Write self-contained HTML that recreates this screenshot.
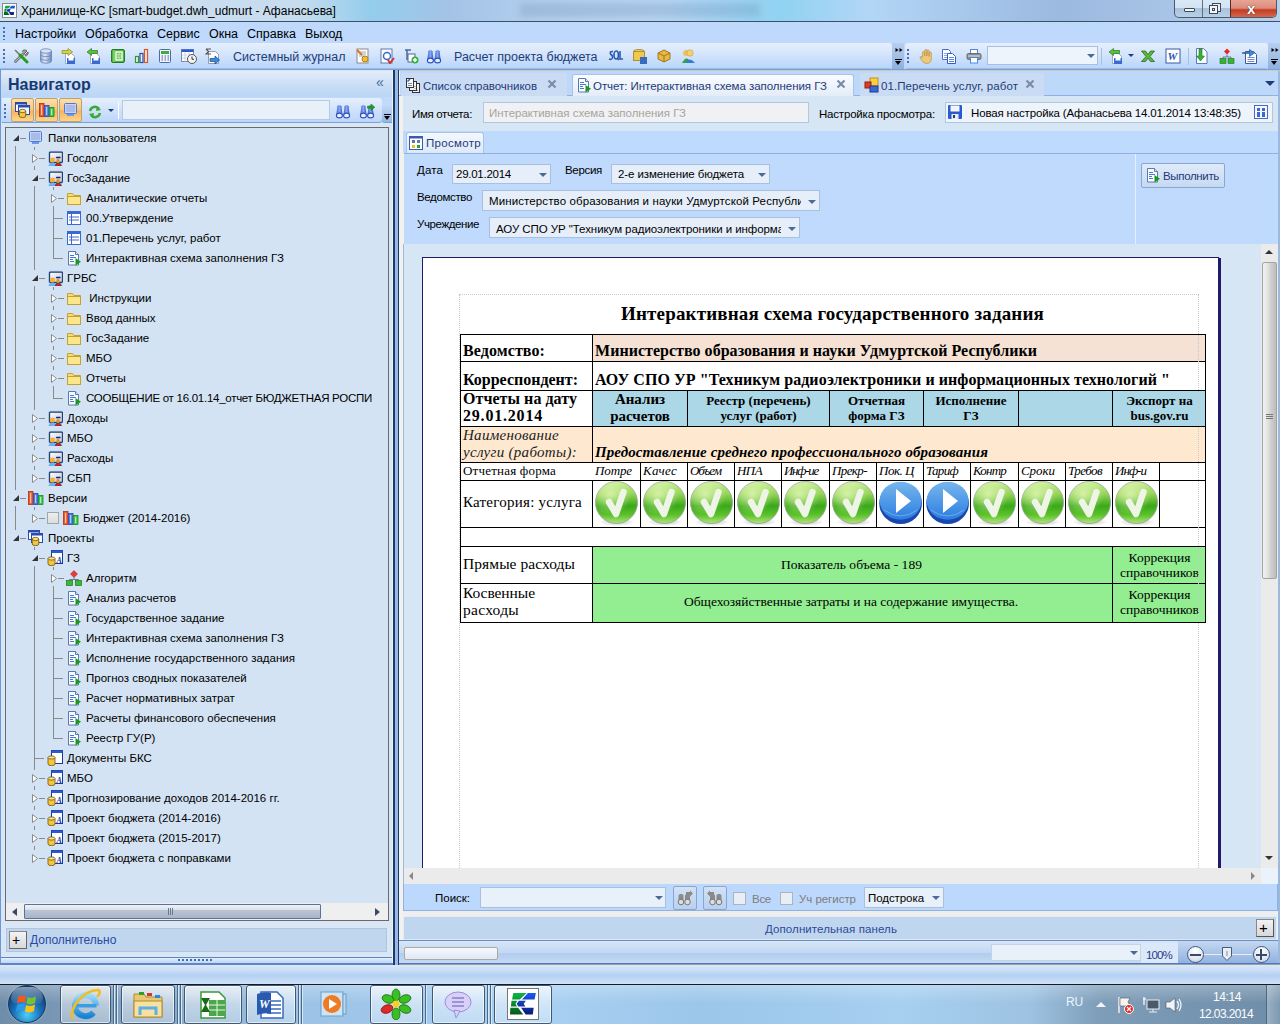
<!DOCTYPE html>
<html><head><meta charset="utf-8">
<style>
*{margin:0;padding:0;box-sizing:border-box}
html,body{width:1280px;height:1024px;overflow:hidden;position:relative;font-family:"Liberation Sans",sans-serif;font-size:12px;color:#000;background:#cfe0f4}
.a{position:absolute}
.t{position:absolute;white-space:nowrap;line-height:1}
#title{left:0;top:0;width:1280px;height:22px;background:linear-gradient(90deg,#d0e1f1 0px,#c6dcef 300px,#94cdec 370px,#a4c3e6 450px,#b2cfee 540px,#b8d6f4 660px,#90d2f2 780px,#b2d6f6 870px,#a8c8ec 960px,#9cb9e0 1060px,#a8c4e6 1174px,#b8d0ea 1280px)}
#menu{left:0;top:22px;width:1280px;height:21px;background:#bed9fc}
#tool{left:0;top:43px;width:1280px;height:26px;background:#bed9fc}
#left{left:0;top:69px;width:395px;height:896px;background:#c9dcf3}
</style></head><body>
<div id="title" class="a">
  <div class="a" style="left:2px;top:3px;width:15px;height:15px;background:#fff;border:1px solid #8a8a8a"><svg class="a" style="left:0;top:0" width="13" height="13" viewBox="0 0 30 30"><defs><linearGradient id="lgG2" x1="0" y1="0" x2="0" y2="1"><stop offset="0" stop-color="#0cb844"/><stop offset="1" stop-color="#055a1c"/></linearGradient><linearGradient id="lgB2" x1="0" y1="0" x2="0" y2="1"><stop offset="0" stop-color="#1a5af8"/><stop offset="1" stop-color="#0a1a78"/></linearGradient></defs><g transform="translate(-1,-1)"><path d="M6.25 4.9 L19.7 4.9 L12.7 11.5 L5.1 11.5Z M4.5 12.7 L10.4 12.7 L8.5 15.8 L10 18.6 L3.9 18.6Z M3.3 19.7 L11.1 19.7 L16.2 26.4 L3 26.4Z" fill="url(#lgG2)"/><path d="M20.9 4.9 L28.9 4.9 L27.5 11.5 L15 11.5Z M11.9 12.7 L18.9 12.7 L16.7 15.8 L18.3 18.6 L11.3 18.6 L9.7 15.8Z M14.1 19.7 L26.7 19.7 L25.8 26.4 L18.6 26.4Z" fill="url(#lgB2)"/></g></svg></div>
  <div class="t" style="left:21px;top:5px;font-size:12px;color:#000">Хранилище-КС [smart-budget.dwh_udmurt - Афанасьева]</div>
  <div class="a" style="left:520px;top:3px;width:240px;height:14px;background:rgba(70,100,140,.18);filter:blur(3px)"></div>
  <div class="a" style="left:1174px;top:0;width:103px;height:18px;border:1px solid #4a5a6e;border-top:none;border-radius:0 0 5px 5px;overflow:hidden;background:linear-gradient(#dbe9f6 0,#d3e3f3 45%,#a9c2dc 50%,#b9d0e6 100%)">
    <div class="a" style="left:27px;top:0;width:1px;height:18px;background:#5f6f82"></div>
    <div class="a" style="left:55px;top:0;width:47px;height:18px;background:linear-gradient(#e8a496 0,#dd8c7c 45%,#c43c22 55%,#d56e55 100%);border-left:1px solid #5a2a20"></div>
    <div class="a" style="left:9px;top:8px;width:11px;height:4px;background:#f4f4f4;border:1px solid #3b4b5f;border-radius:1px"></div>
    <div class="a" style="left:37px;top:3px;width:9px;height:9px;border:1px solid #3b4b5f;background:#eee"></div>
    <div class="a" style="left:34px;top:5px;width:9px;height:9px;border:1px solid #3b4b5f;background:#f4f4f4"><div class="a" style="left:2px;top:2px;width:3px;height:3px;border:1px solid #3b4b5f"></div></div>
    <div class="t" style="left:72px;top:1px;font-size:15px;font-weight:bold;color:#fff;text-shadow:0 0 1px #333,0 0 1px #333">x</div>
  </div>
  <div class="a" style="left:0;top:21px;width:1280px;height:1px;background:#3d4f66"></div>
</div>
<div id="menu" class="a">
  <div class="a" style="left:3px;top:5px;width:2px;height:13px;background:repeating-linear-gradient(#4b6fa8 0 2px,transparent 2px 4px)"></div>
  <div class="t" style="left:15px;top:6px;font-size:12.5px">Настройки</div>
  <div class="t" style="left:85px;top:6px;font-size:12.5px">Обработка</div>
  <div class="t" style="left:157px;top:6px;font-size:12.5px">Сервис</div>
  <div class="t" style="left:209px;top:6px;font-size:12.5px">Окна</div>
  <div class="t" style="left:247px;top:6px;font-size:12.5px">Справка</div>
  <div class="t" style="left:305px;top:6px;font-size:12.5px">Выход</div>
</div>
<div id="tool" class="a">
  <div class="a" style="left:0;top:0;width:892px;height:26px;border-radius:0 3px 3px 0;background:linear-gradient(#e6f0fd,#d2e3fb 50%,#b9d6fc);border-bottom:1px solid #9fbbe0"></div>
  <div class="a" style="left:892px;top:0;width:12px;height:26px;background:linear-gradient(#b7cfee,#8fb1df)"></div>
  <div class="a" style="left:905px;top:0;width:363px;height:26px;border-radius:3px;background:linear-gradient(#e6f0fd,#d2e3fb 50%,#b9d6fc);border-bottom:1px solid #9fbbe0"></div>
  <div class="a" style="left:1268px;top:0;width:12px;height:26px;background:linear-gradient(#b7cfee,#8fb1df)"></div>
  <div class="a" style="left:3px;top:6px;width:2px;height:14px;background:repeating-linear-gradient(#4b6fa8 0 2px,transparent 2px 4px)"></div>
  <div class="a" style="left:907px;top:6px;width:2px;height:14px;background:repeating-linear-gradient(#4b6fa8 0 2px,transparent 2px 4px)"></div>
  <svg class="a" style="left:13px;top:5px" width="16" height="16" viewBox="0 0 16 16"><path d="M2.5 13.5 L10 6" stroke="#5a5a5a" stroke-width="2.6" stroke-linecap="round"/><path d="M2.5 13.5 L10 6" stroke="#b8b8b8" stroke-width="1.2" stroke-linecap="round"/><path d="M9 3.5 A3 3 0 0 1 14 3 L11.5 5.5 L12.5 6.5 L15 4 A3 3 0 0 1 12 8" fill="#9a9a9a" stroke="#555" stroke-width=".8"/><path d="M2 2 L7 7" stroke="#777" stroke-width="1.6"/><path d="M7 7 L14 14" stroke="#2a9a1a" stroke-width="3" stroke-linecap="round"/></svg>
  <svg class="a" style="left:38px;top:5px" width="16" height="16" viewBox="0 0 16 16"><defs><linearGradient id="dbg" x1="0" x2="1"><stop offset="0" stop-color="#8aa8d8"/><stop offset=".4" stop-color="#dfe8f8"/><stop offset="1" stop-color="#6a88c0"/></linearGradient></defs><path d="M2.5 3 V13 A5.5 2.2 0 0 0 13.5 13 V3" fill="url(#dbg)" stroke="#6a84b0" stroke-width=".8"/><ellipse cx="8" cy="3" rx="5.5" ry="2.2" fill="#d8e4f6" stroke="#6a84b0" stroke-width=".8"/><path d="M2.5 6.5 A5.5 2.2 0 0 0 13.5 6.5 M2.5 10 A5.5 2.2 0 0 0 13.5 10" fill="none" stroke="#6a84b0" stroke-width=".8"/></svg>
  <svg class="a" style="left:61px;top:5px" width="16" height="16" viewBox="0 0 16 16"><path d="M4.5 5.5 h6 l3 3 v7 h-9z" fill="#fff" stroke="#8a9ab8" stroke-width=".8"/><rect x="6" y="10" width="8" height="6" fill="#3a6ad0"/><rect x="7.5" y="10" width="5" height="2.5" fill="#fff"/><path d="M1 2.5 h6 v-2 l4.5 3.5 l-4.5 3.5 v-2 h-6z" fill="#d8d040" stroke="#8a8a20" stroke-width=".7"/></svg>
  <svg class="a" style="left:86px;top:5px" width="16" height="16" viewBox="0 0 16 16"><path d="M4.5 5.5 h6 l3 3 v7 h-9z" fill="#fff" stroke="#8a9ab8" stroke-width=".8"/><rect x="6" y="10" width="8" height="6" fill="#3a6ad0"/><rect x="7.5" y="10" width="5" height="2.5" fill="#fff"/><path d="M11.5 2.5 h-6 v-2 l-4.5 3.5 l4.5 3.5 v-2 h6z" fill="#5ac040" stroke="#2a7a20" stroke-width=".7"/></svg>
  <svg class="a" style="left:110px;top:5px" width="16" height="16" viewBox="0 0 16 16"><rect x="1.5" y="1.5" width="13" height="13" rx="1.5" fill="#4cb83a" stroke="#2a7a20"/><path d="M4 2v12" stroke="#a8e098" stroke-width="1"/><rect x="6" y="4" width="6" height="8" fill="none" stroke="#fff" stroke-width="1.4"/><rect x="8" y="6" width="2" height="4" fill="none" stroke="#fff" stroke-width=".8"/></svg>
  <svg class="a" style="left:133px;top:5px" width="16" height="16" viewBox="0 0 16 16"><rect x="2.5" y="8.5" width="3" height="6" fill="#e8f4e0" stroke="#2a9a2a" stroke-width="1.2"/><rect x="7" y="5.5" width="3" height="9" fill="#e8eefa" stroke="#2a4aa0" stroke-width="1.2"/><rect x="11.5" y="1.5" width="3" height="13" fill="#faeae4" stroke="#d05a30" stroke-width="1.2"/></svg>
  <svg class="a" style="left:157px;top:5px" width="16" height="16" viewBox="0 0 16 16"><rect x="2.5" y="1.5" width="11" height="13" rx="1" fill="#f4f6fc" stroke="#4a6ab0"/><rect x="4" y="3" width="8" height="3" fill="#3ab03a"/><path d="M4.5 8h1.5M7.5 8h1.5M10.5 8h1.5M4.5 10h1.5M7.5 10h1.5M10.5 10h1.5M4.5 12h1.5M7.5 12h1.5M10.5 12h1.5" stroke="#3a5aa0" stroke-width="1.2"/></svg>
  <svg class="a" style="left:181px;top:5px" width="16" height="16" viewBox="0 0 16 16"><rect x="0.5" y="1.5" width="12" height="12" fill="#fff" stroke="#7a8ab0"/><rect x="0.5" y="1.5" width="12" height="2.5" fill="#2a5ad0"/><path d="M1 7h11M1 10h11M4 4v10M8 4v10" stroke="#b0bcd8" stroke-width=".6"/><circle cx="11" cy="11" r="4.5" fill="#f4f4f4" stroke="#555"/><path d="M11 8.5v2.8h2" stroke="#333" fill="none"/></svg>
  <svg class="a" style="left:205px;top:5px" width="16" height="16" viewBox="0 0 16 16"><path d="M3.5 3.5 h7 l3 3 v9 h-10z" fill="#fff" stroke="#7a8aa0" stroke-width=".8"/><path d="M1 1 h5 M1 1 l2.5 2.5 l-2.5 2.5 h5" stroke="#555" stroke-width="1.2" fill="none"/><path d="M5 10.5 h5 v-2.5 l4.5 4 l-4.5 4 v-2.5 h-5z" fill="#3a8ae0" stroke="#1a4a90" stroke-width=".7"/></svg>
  <svg class="a" style="left:355px;top:5px" width="16" height="16" viewBox="0 0 16 16"><rect x="2" y="1" width="11" height="14" fill="#fff" stroke="#8a8a8a"/><path d="M4 4h7M4 6h7M4 8h5" stroke="#9ab"/><circle cx="10" cy="11" r="3" fill="#f0c040" stroke="#b08010"/><path d="M2 2 L7 7" stroke="#e07020" stroke-width="2"/></svg>
  <svg class="a" style="left:379px;top:5px" width="16" height="16" viewBox="0 0 16 16"><rect x="2" y="1" width="11" height="14" fill="#fff" stroke="#5a7ab0"/><circle cx="8" cy="8" r="3.5" fill="none" stroke="#3a6ac0" stroke-width="1.5"/><path d="M9 12 l2 3 l4 -5" stroke="#d03030" stroke-width="2" fill="none"/></svg>
  <svg class="a" style="left:403px;top:5px" width="16" height="16" viewBox="0 0 16 16"><path d="M2 2h6M4 2v10" stroke="#4a6a9a" stroke-width="1.5"/><rect x="5" y="6" width="7" height="8" fill="#fff" stroke="#4a6a9a"/><circle cx="12" cy="12" r="3.5" fill="#3ab03a"/><path d="M12 10v4M10 12h4" stroke="#fff" stroke-width="1.5"/></svg>
  <svg class="a" style="left:426px;top:5px" width="16" height="16" viewBox="0 0 16 16"><defs><linearGradient id="bng3" x1="0" x2="1"><stop offset="0" stop-color="#3a60d0"/><stop offset=".5" stop-color="#8aa8f0"/><stop offset="1" stop-color="#2a50c0"/></linearGradient></defs><path d="M1.2 12.5 L2.4 3.2 Q4.4 0.6 6.4 3.2 L7.6 12.5Z" fill="url(#bng3)"/><path d="M8.4 12.5 L9.6 3.2 Q11.6 0.6 13.6 3.2 L14.8 12.5Z" fill="url(#bng3)"/><ellipse cx="4.4" cy="12.5" rx="3" ry="2.4" fill="#e8f0fc" stroke="#2a50c0" stroke-width="1.1"/><ellipse cx="11.6" cy="12.5" rx="3" ry="2.4" fill="#e8f0fc" stroke="#2a50c0" stroke-width="1.1"/></svg>
  <svg class="a" style="left:608px;top:5px" width="16" height="16" viewBox="0 0 16 16"><path d="M5 3.5 Q1.5 3 2.5 6 Q5 7.5 4.5 10 Q3.5 12 1 11" stroke="#2a5ab0" stroke-width="1.6" fill="none"/><ellipse cx="8.2" cy="7" rx="2.2" ry="4" stroke="#2a5ab0" stroke-width="1.6" fill="none"/><path d="M9 10 L11 12" stroke="#2a5ab0" stroke-width="1.6"/><path d="M12 3 V11 H15" stroke="#2a5ab0" stroke-width="1.6" fill="none"/></svg>
  <svg class="a" style="left:632px;top:5px" width="16" height="16" viewBox="0 0 16 16"><ellipse cx="7" cy="3.5" rx="5.5" ry="2" fill="#f0d070" stroke="#b09030"/><rect x="1.5" y="3.5" width="11" height="9" fill="#f0c850" stroke="#b09030"/><rect x="8" y="9" width="7" height="7" fill="#3a6ac0"/></svg>
  <svg class="a" style="left:656px;top:5px" width="16" height="16" viewBox="0 0 16 16"><path d="M8 2 L14 5 V11 L8 14 L2 11 V5 Z" fill="#e8b840" stroke="#a07820"/><path d="M2 5 L8 8 L14 5 M8 8 V14" stroke="#a07820" fill="none"/></svg>
  <svg class="a" style="left:680px;top:5px" width="16" height="16" viewBox="0 0 16 16"><circle cx="6" cy="5" r="3" fill="#f0c060"/><circle cx="10" cy="5" r="3.2" fill="#f5d070" stroke="#c09030" stroke-width=".5"/><path d="M2 15 Q6 8 9 12 V15Z" fill="#3aa03a"/><path d="M5 15 Q10 8 15 15Z" fill="#3a7ad0"/></svg>
  <svg class="a" style="left:918px;top:5px" width="16" height="16" viewBox="0 0 16 16"><path d="M4.5 9.5 V4.5 a1.1 1.1 0 0 1 2.2 0 V8 V2.5 a1.1 1.1 0 0 1 2.2 0 V8 V3 a1.1 1.1 0 0 1 2.2 0 V8.5 V5 a1.1 1.1 0 0 1 2.2 0 V11 Q13 15.5 8.5 15.5 Q5.5 15.5 3.5 12 L1.8 9 Q2.8 7.8 4.5 9.5Z" fill="#eec878" stroke="#b8904a" stroke-width=".7"/></svg>
  <svg class="a" style="left:941px;top:5px" width="16" height="16" viewBox="0 0 16 16"><path d="M1.5 1.5 h6 l2 2 v8 h-8z" fill="#fff" stroke="#4a6ad0"/><path d="M3 5.5h4M3 7.5h4M3 9.5h4" stroke="#8aa8e0"/><path d="M6.5 5.5 h5 l3 3 v7 h-8z" fill="#fff" stroke="#3a5ac8"/><path d="M8 9.5h5M8 11.5h5M8 13.5h5" stroke="#5a88d8"/></svg>
  <svg class="a" style="left:966px;top:5px" width="16" height="16" viewBox="0 0 16 16"><rect x="4.5" y="1.5" width="7" height="5" fill="#fff" stroke="#4a8ad8"/><rect x="1" y="5.5" width="14" height="6" rx="1.5" fill="#8a8e92" stroke="#6a6e72"/><rect x="2" y="7" width="12" height="2" fill="#b8bcc0"/><rect x="4.5" y="9.5" width="7" height="5.5" fill="#fff" stroke="#4a8ad8"/></svg>
  <svg class="a" style="left:1108px;top:5px" width="16" height="16" viewBox="0 0 16 16"><path d="M4.5 5.5 h6 l3 3 v7 h-9z" fill="#fff" stroke="#8a9ab8" stroke-width=".8"/><rect x="6" y="10" width="8" height="6" fill="#3a6ad0"/><rect x="7.5" y="10" width="5" height="2.5" fill="#fff"/><path d="M11.5 2.5 h-6 v-2 l-4.5 3.5 l4.5 3.5 v-2 h6z" fill="#5ac040" stroke="#2a7a20" stroke-width=".7"/></svg>
  <svg class="a" style="left:1140px;top:5px" width="16" height="16" viewBox="0 0 16 16"><path d="M1.5 3 L5.5 3 L8 6.5 L10.5 3 L14.5 3 L10 8.5 L14.5 13.5 L10.5 13.5 L8 10 L5.5 13.5 L1.5 13.5 L6 8.5Z" fill="#5ab83a" stroke="#2a6a1a" stroke-width=".8"/></svg>
  <svg class="a" style="left:1165px;top:5px" width="16" height="16" viewBox="0 0 16 16"><rect x="1" y="1" width="14" height="14" fill="#fff" stroke="#3a5aa0"/><text x="2.5" y="12" font-family="Liberation Serif" font-style="italic" font-weight="bold" font-size="11" fill="#2a5ab0">W</text></svg>
  <svg class="a" style="left:1194px;top:5px" width="16" height="16" viewBox="0 0 16 16"><path d="M2.5 0.5 h7 l3.5 3.5 v11.5 h-10.5z" fill="#fff" stroke="#5a7ab8"/><path d="M5 1 V8 H2.5 L6.5 13 L10.5 8 H8 V1Z" fill="#3ab03a" stroke="#1a7a1a" stroke-width=".6"/></svg>
  <svg class="a" style="left:1219px;top:5px" width="16" height="16" viewBox="0 0 16 16"><path d="M8 0.5 L11 3.5 L8 6.5 L5 3.5Z" fill="#e82a2a"/><path d="M8 6.5 V9 M4 9 H12 M4 9v2 M12 9v2" stroke="#6a7aa0"/><rect x="1" y="10.5" width="6" height="5" fill="#3ab03a" stroke="#1a7a1a" stroke-width=".6"/><rect x="9" y="10.5" width="6" height="5" fill="#3ab03a" stroke="#1a7a1a" stroke-width=".6"/></svg>
  <svg class="a" style="left:1242px;top:5px" width="16" height="16" viewBox="0 0 16 16"><path d="M3.5 3.5 h8 l3 3 v9 h-11z" fill="#fff" stroke="#3a5aa0"/><path d="M5.5 9.5h7M5.5 11.5h7M5.5 13.5h7" stroke="#6a8ad0"/><path d="M0.5 4.5 h7 v-3 l5 3.5 l-5 3.5 v-3 h-7z" fill="#3a8ae0" stroke="#1a4a90" stroke-width=".6"/></svg>
  <div class="t" style="left:233px;top:8px;font-size:12.5px;color:#1e3c78">Системный журнал</div>
  <div class="t" style="left:454px;top:8px;font-size:12.5px;color:#1e3c78">Расчет проекта бюджета</div>
  <div class="a" style="left:987px;top:3px;width:111px;height:19px;background:#eef4fc;border:1px solid #a8c0de"></div>
  <div class="a" style="left:1087px;top:11px;width:0;height:0;border-left:4px solid transparent;border-right:4px solid transparent;border-top:4px solid #4a6a9a"></div>
  <div class="a" style="left:1101px;top:5px;width:1px;height:17px;background:#a9c1e0"></div>
  <div class="a" style="left:1188px;top:5px;width:1px;height:17px;background:#a9c1e0"></div>
  <div class="a" style="left:1128px;top:11px;width:0;height:0;border-left:3px solid transparent;border-right:3px solid transparent;border-top:3px solid #1e3c78"></div>
  <svg class="a" style="left:895px;top:4px" width="8" height="6" viewBox="0 0 8 6"><path d="M0.5 1 L3.5 3 L0.5 5Z M4.5 1 L7.5 3 L4.5 5Z" fill="#000"/></svg>
  <div class="a" style="left:895px;top:16px;width:7px;height:6px;border-top:1px solid #000;"><div class="a" style="left:0;top:1px;border-left:3.5px solid transparent;border-right:3.5px solid transparent;border-top:4px solid #000"></div></div>
  <svg class="a" style="left:1271px;top:4px" width="8" height="6" viewBox="0 0 8 6"><path d="M0.5 1 L3.5 3 L0.5 5Z M4.5 1 L7.5 3 L4.5 5Z" fill="#000"/></svg>
  <div class="a" style="left:1271px;top:16px;width:7px;height:6px;border-top:1px solid #000;"><div class="a" style="left:0;top:1px;border-left:3.5px solid transparent;border-right:3.5px solid transparent;border-top:4px solid #000"></div></div>
</div>



<div id="left" class="a">
  <div class="a" style="left:0;top:0;width:393px;height:896px;background:#d8e6f5;border-left:1px solid #6a98d8;border-top:1px solid #6a98d8"></div>
  <div class="a" style="left:1px;top:2px;width:391px;height:26px;background:linear-gradient(#e2ecfb,#c8dcf5 60%,#b9d5f8)"></div>
  <div class="t" style="left:8px;top:8px;font-size:16px;font-weight:bold;color:#173a72">Навигатор</div>
  <div class="t" style="left:376px;top:6px;font-size:14px;color:#4a6a9a">«</div>
  <div class="a" style="left:1px;top:28px;width:392px;height:26px;background:#c2dafa"></div><div class="a" style="left:2px;top:29px;width:380px;height:25px;border-radius:0 4px 4px 0;background:linear-gradient(#e6f0fd,#d0e2fa 50%,#bcd6fa);border-bottom:1px solid #7aa0d8"></div>
  <div class="a" style="left:382px;top:35px;width:11px;height:19px;border-radius:0 0 0 3px;background:linear-gradient(#c6dcf8,#94b6e2);border-bottom:1px solid #7aa0d8"></div>
  <div class="a" style="left:384px;top:45px;width:7px;height:1px;background:#000"></div>
  <div class="a" style="left:384px;top:47px;border-left:3.5px solid transparent;border-right:3.5px solid transparent;border-top:4px solid #000"></div>
  <div class="a" style="left:4px;top:35px;width:2px;height:14px;background:repeating-linear-gradient(#4b6fa8 0 2px,transparent 2px 4px)"></div>
  <div class="a" style="left:11px;top:29px;width:23px;height:24px;border:1px solid #c2a068;border-radius:2px;background:linear-gradient(#fde0a8,#f9c57c 50%,#f7b25a 55%,#fbd690)"></div>
  <div class="a" style="left:35px;top:29px;width:23px;height:24px;border:1px solid #c2a068;border-radius:2px;background:linear-gradient(#fde0a8,#f9c57c 50%,#f7b25a 55%,#fbd690)"></div>
  <div class="a" style="left:59px;top:29px;width:23px;height:24px;border:1px solid #c2a068;border-radius:2px;background:linear-gradient(#fde0a8,#f9c57c 50%,#f7b25a 55%,#fbd690)"></div>
  <svg class="a" style="left:15px;top:33px" width="16" height="16" viewBox="0 0 16 16"><rect x="0.5" y="0.5" width="11" height="9" fill="#fff" stroke="#2a4ab0"/><rect x="0.5" y="0.5" width="11" height="2" fill="#2a4ab0"/><rect x="3.5" y="3.5" width="11" height="9" fill="#f4f8ff" stroke="#2a4ab0"/><rect x="3.5" y="3.5" width="11" height="2" fill="#2a4ab0"/><path d="M4.25 9 V14 A3.25 1.6 0 0 0 10.75 14 V9" fill="#f6c63a" stroke="#6a5010" stroke-width=".8"/><ellipse cx="7.5" cy="9" rx="3.25" ry="1.6" fill="#fde48a" stroke="#6a5010" stroke-width=".8"/></svg>
  <svg class="a" style="left:39px;top:33px" width="16" height="16" viewBox="0 0 16 16"><rect x="0.5" y="1.5" width="4.5" height="13" fill="#f05a2a" stroke="#b03010" stroke-width=".8"/><rect x="5.5" y="3.5" width="4.5" height="11" fill="#4a7ae8" stroke="#2a4ab0" stroke-width=".8"/><rect x="10.5" y="5.5" width="4.5" height="9" fill="#3ac84a" stroke="#1a8a2a" stroke-width=".8"/><path d="M2.7 3v10M7.7 5v8M12.7 7v6" stroke="#fff" stroke-width=".9" opacity=".85"/></svg>
  <svg class="a" style="left:63px;top:33px" width="16" height="16" viewBox="0 0 16 16"><rect x="1.5" y="1.5" width="12" height="10" rx="1" fill="#c9d6f2" stroke="#4a7ad8"/><rect x="3" y="3" width="9" height="7" fill="#a9bbe8"/><rect x="4" y="12" width="7" height="2" fill="#6a9ae8"/></svg>
  <svg class="a" style="left:87px;top:35px" width="16" height="16" viewBox="0 0 16 16"><path d="M3 7 A5 5 0 0 1 12 5" stroke="#3aa83a" stroke-width="2.5" fill="none"/><path d="M10 2 L14 6 L9 7Z" fill="#3aa83a"/><path d="M13 9 A5 5 0 0 1 4 11" stroke="#3aa83a" stroke-width="2.5" fill="none"/><path d="M6 14 L2 10 L7 9Z" fill="#3aa83a"/></svg>
  <div class="a" style="left:108px;top:40px;border-left:3px solid transparent;border-right:3px solid transparent;border-top:3px solid #1e3c78"></div>
  <div class="a" style="left:118px;top:33px;width:1px;height:17px;background:#fff"></div>
  <div class="a" style="left:122px;top:31px;width:208px;height:20px;background:#e8f0fa;border:1px solid #b5c9e4"></div>
  <svg class="a" style="left:335px;top:34px" width="16" height="16" viewBox="0 0 16 16"><defs><linearGradient id="bng" x1="0" x2="1"><stop offset="0" stop-color="#3a60d0"/><stop offset=".5" stop-color="#8aa8f0"/><stop offset="1" stop-color="#2a50c0"/></linearGradient></defs><path d="M1.2 12.5 L2.4 3.2 Q4.4 0.6 6.4 3.2 L7.6 12.5Z" fill="url(#bng)"/><path d="M8.4 12.5 L9.6 3.2 Q11.6 0.6 13.6 3.2 L14.8 12.5Z" fill="url(#bng)"/><ellipse cx="4.4" cy="12.5" rx="3" ry="2.4" fill="#e8f0fc" stroke="#2a50c0" stroke-width="1.1"/><ellipse cx="11.6" cy="12.5" rx="3" ry="2.4" fill="#e8f0fc" stroke="#2a50c0" stroke-width="1.1"/></svg>
  <svg class="a" style="left:359px;top:34px" width="16" height="16" viewBox="0 0 16 16"><defs><linearGradient id="bng2" x1="0" x2="1"><stop offset="0" stop-color="#3a60d0"/><stop offset=".5" stop-color="#8aa8f0"/><stop offset="1" stop-color="#2a50c0"/></linearGradient></defs><path d="M1.2 12.5 L2.4 3.2 Q4.4 0.6 6.4 3.2 L7.6 12.5Z" fill="url(#bng2)"/><path d="M8.4 12.5 L9.6 3.2 Q11.6 0.6 13.6 3.2 L14.8 12.5Z" fill="url(#bng2)"/><ellipse cx="4.4" cy="12.5" rx="3" ry="2.4" fill="#e8f0fc" stroke="#2a50c0" stroke-width="1.1"/><ellipse cx="11.6" cy="12.5" rx="3" ry="2.4" fill="#e8f0fc" stroke="#2a50c0" stroke-width="1.1"/><path d="M8.5 3.2 h3.5 v-2.2 l3.8 3.2 l-3.8 3.2 v-2.2 h-3.5z" fill="#22a022" stroke="#107010" stroke-width=".5"/></svg>
  <!-- tree frame -->
  <div class="a" style="left:5px;top:58px;width:384px;height:794px;border:1px solid #6a6a6a;background:#d3e3f3"></div>
  <div class="a" style="left:6px;top:834px;width:382px;height:17px;background:#efefef"></div>
  <div class="a" style="left:12px;top:839px;border-top:4px solid transparent;border-bottom:4px solid transparent;border-right:5px solid #3a4a6a"></div>
  <div class="a" style="left:375px;top:839px;border-top:4px solid transparent;border-bottom:4px solid transparent;border-left:5px solid #3a4a6a"></div>
  <div class="a" style="left:24px;top:835px;width:297px;height:15px;border:1px solid #5a72a0;border-radius:1px;background:linear-gradient(#f0f2f5 0,#dde2ea 35%,#b9c4d4 40%,#a9b6c8 100%)"></div>
  <div class="a" style="left:168px;top:839px;width:6px;height:7px;background:repeating-linear-gradient(90deg,#6a7a90 0 1px,transparent 1px 2px)"></div>
  <!-- dop -->
  <div class="a" style="left:6px;top:859px;width:381px;height:24px;background:#c0d6ee;border:1px solid #b0c4dc"></div>
  <div class="a" style="left:9px;top:862px;width:18px;height:18px;background:linear-gradient(#f3f3f3,#d8d8d8);border:1px solid #888;border-right-color:#666;border-bottom-color:#666"></div>
  <div class="t" style="left:12px;top:864px;font-size:14px;color:#000">+</div>
  <div class="t" style="left:30px;top:865px;color:#2a4aa0">Дополнительно</div>
  <div class="a" style="left:1px;top:888px;width:392px;height:1px;background:#5f86c0"></div>
  <div class="a" style="left:1px;top:889px;width:392px;height:5px;background:linear-gradient(#e2eefb,#bcd6f8)"></div>
  <div class="a" style="left:178px;top:890px;width:34px;height:2px;background:repeating-linear-gradient(90deg,#4a6aa8 0 2px,transparent 2px 4px)"></div>
  <div class="a" style="left:392px;top:1px;width:1px;height:895px;background:#f4f2f0"></div>
</div>
<div id="tree" class="a" style="left:0;top:0;width:395px;height:965px;overflow:hidden;clip-path:inset(128px 7px 63px 6px)">
<div class="a" style="left:15px;top:146px;width:1px;height:344px;border-left:1px solid #8a8a8a"></div>
<div class="a" style="left:34px;top:166px;width:1px;height:4px;border-left:1px dashed #8a8a8a"></div>
<div class="a" style="left:34px;top:186px;width:1px;height:84px;border-left:1px solid #8a8a8a"></div>
<div class="a" style="left:53px;top:206px;width:1px;height:2px;border-left:1px dashed #8a8a8a"></div>
<div class="a" style="left:53px;top:218px;width:1px;height:10px;border-left:1px solid #8a8a8a"></div>
<div class="a" style="left:53px;top:238px;width:1px;height:10px;border-left:1px solid #8a8a8a"></div>
<div class="a" style="left:34px;top:286px;width:1px;height:124px;border-left:1px solid #8a8a8a"></div>
<div class="a" style="left:53px;top:306px;width:1px;height:4px;border-left:1px dashed #8a8a8a"></div>
<div class="a" style="left:53px;top:326px;width:1px;height:4px;border-left:1px dashed #8a8a8a"></div>
<div class="a" style="left:53px;top:346px;width:1px;height:4px;border-left:1px dashed #8a8a8a"></div>
<div class="a" style="left:53px;top:366px;width:1px;height:4px;border-left:1px dashed #8a8a8a"></div>
<div class="a" style="left:53px;top:386px;width:1px;height:2px;border-left:1px dashed #8a8a8a"></div>
<div class="a" style="left:34px;top:426px;width:1px;height:4px;border-left:1px dashed #8a8a8a"></div>
<div class="a" style="left:34px;top:446px;width:1px;height:4px;border-left:1px dashed #8a8a8a"></div>
<div class="a" style="left:34px;top:466px;width:1px;height:4px;border-left:1px dashed #8a8a8a"></div>
<div class="a" style="left:15px;top:506px;width:1px;height:24px;border-left:1px solid #8a8a8a"></div>
<div class="a" style="left:34px;top:566px;width:1px;height:182px;border-left:1px solid #8a8a8a"></div>
<div class="a" style="left:53px;top:586px;width:1px;height:2px;border-left:1px dashed #8a8a8a"></div>
<div class="a" style="left:53px;top:598px;width:1px;height:10px;border-left:1px solid #8a8a8a"></div>
<div class="a" style="left:53px;top:618px;width:1px;height:10px;border-left:1px solid #8a8a8a"></div>
<div class="a" style="left:53px;top:638px;width:1px;height:10px;border-left:1px solid #8a8a8a"></div>
<div class="a" style="left:53px;top:658px;width:1px;height:10px;border-left:1px solid #8a8a8a"></div>
<div class="a" style="left:53px;top:678px;width:1px;height:10px;border-left:1px solid #8a8a8a"></div>
<div class="a" style="left:53px;top:698px;width:1px;height:10px;border-left:1px solid #8a8a8a"></div>
<div class="a" style="left:53px;top:718px;width:1px;height:10px;border-left:1px solid #8a8a8a"></div>
<div class="a" style="left:34px;top:758px;width:1px;height:12px;border-left:1px solid #8a8a8a"></div>
<div class="a" style="left:34px;top:786px;width:1px;height:4px;border-left:1px dashed #8a8a8a"></div>
<div class="a" style="left:34px;top:806px;width:1px;height:4px;border-left:1px dashed #8a8a8a"></div>
<div class="a" style="left:34px;top:826px;width:1px;height:4px;border-left:1px dashed #8a8a8a"></div>
<div class="a" style="left:34px;top:846px;width:1px;height:4px;border-left:1px dashed #8a8a8a"></div>
<div class="a" style="left:20px;top:138px;width:6px;height:1px;background:#8a8a8a"></div>
<div class="a" style="left:39px;top:158px;width:6px;height:1px;background:#8a8a8a"></div>
<div class="a" style="left:39px;top:178px;width:6px;height:1px;background:#8a8a8a"></div>
<div class="a" style="left:58px;top:198px;width:6px;height:1px;background:#8a8a8a"></div>
<div class="a" style="left:53px;top:208px;width:1px;height:10px;background:#8a8a8a"></div>
<div class="a" style="left:53px;top:218px;width:10px;height:1px;background:#8a8a8a"></div>
<div class="a" style="left:53px;top:228px;width:1px;height:10px;background:#8a8a8a"></div>
<div class="a" style="left:53px;top:238px;width:10px;height:1px;background:#8a8a8a"></div>
<div class="a" style="left:53px;top:248px;width:1px;height:10px;background:#8a8a8a"></div>
<div class="a" style="left:53px;top:258px;width:10px;height:1px;background:#8a8a8a"></div>
<div class="a" style="left:39px;top:278px;width:6px;height:1px;background:#8a8a8a"></div>
<div class="a" style="left:58px;top:298px;width:6px;height:1px;background:#8a8a8a"></div>
<div class="a" style="left:58px;top:318px;width:6px;height:1px;background:#8a8a8a"></div>
<div class="a" style="left:58px;top:338px;width:6px;height:1px;background:#8a8a8a"></div>
<div class="a" style="left:58px;top:358px;width:6px;height:1px;background:#8a8a8a"></div>
<div class="a" style="left:58px;top:378px;width:6px;height:1px;background:#8a8a8a"></div>
<div class="a" style="left:53px;top:388px;width:1px;height:10px;background:#8a8a8a"></div>
<div class="a" style="left:53px;top:398px;width:10px;height:1px;background:#8a8a8a"></div>
<div class="a" style="left:39px;top:418px;width:6px;height:1px;background:#8a8a8a"></div>
<div class="a" style="left:39px;top:438px;width:6px;height:1px;background:#8a8a8a"></div>
<div class="a" style="left:39px;top:458px;width:6px;height:1px;background:#8a8a8a"></div>
<div class="a" style="left:39px;top:478px;width:6px;height:1px;background:#8a8a8a"></div>
<div class="a" style="left:20px;top:498px;width:6px;height:1px;background:#8a8a8a"></div>
<div class="a" style="left:39px;top:518px;width:6px;height:1px;background:#8a8a8a"></div>
<div class="a" style="left:20px;top:538px;width:6px;height:1px;background:#8a8a8a"></div>
<div class="a" style="left:39px;top:558px;width:6px;height:1px;background:#8a8a8a"></div>
<div class="a" style="left:58px;top:578px;width:6px;height:1px;background:#8a8a8a"></div>
<div class="a" style="left:53px;top:588px;width:1px;height:10px;background:#8a8a8a"></div>
<div class="a" style="left:53px;top:598px;width:10px;height:1px;background:#8a8a8a"></div>
<div class="a" style="left:53px;top:608px;width:1px;height:10px;background:#8a8a8a"></div>
<div class="a" style="left:53px;top:618px;width:10px;height:1px;background:#8a8a8a"></div>
<div class="a" style="left:53px;top:628px;width:1px;height:10px;background:#8a8a8a"></div>
<div class="a" style="left:53px;top:638px;width:10px;height:1px;background:#8a8a8a"></div>
<div class="a" style="left:53px;top:648px;width:1px;height:10px;background:#8a8a8a"></div>
<div class="a" style="left:53px;top:658px;width:10px;height:1px;background:#8a8a8a"></div>
<div class="a" style="left:53px;top:668px;width:1px;height:10px;background:#8a8a8a"></div>
<div class="a" style="left:53px;top:678px;width:10px;height:1px;background:#8a8a8a"></div>
<div class="a" style="left:53px;top:688px;width:1px;height:10px;background:#8a8a8a"></div>
<div class="a" style="left:53px;top:698px;width:10px;height:1px;background:#8a8a8a"></div>
<div class="a" style="left:53px;top:708px;width:1px;height:10px;background:#8a8a8a"></div>
<div class="a" style="left:53px;top:718px;width:10px;height:1px;background:#8a8a8a"></div>
<div class="a" style="left:53px;top:728px;width:1px;height:10px;background:#8a8a8a"></div>
<div class="a" style="left:53px;top:738px;width:10px;height:1px;background:#8a8a8a"></div>
<div class="a" style="left:34px;top:748px;width:1px;height:10px;background:#8a8a8a"></div>
<div class="a" style="left:34px;top:758px;width:10px;height:1px;background:#8a8a8a"></div>
<div class="a" style="left:39px;top:778px;width:6px;height:1px;background:#8a8a8a"></div>
<div class="a" style="left:39px;top:798px;width:6px;height:1px;background:#8a8a8a"></div>
<div class="a" style="left:39px;top:818px;width:6px;height:1px;background:#8a8a8a"></div>
<div class="a" style="left:39px;top:838px;width:6px;height:1px;background:#8a8a8a"></div>
<div class="a" style="left:39px;top:858px;width:6px;height:1px;background:#8a8a8a"></div>
<div class="a" style="left:34px;top:147px;width:1px;height:3px;border-left:1px dashed #8a8a8a"></div>
<div class="a" style="left:53px;top:187px;width:1px;height:3px;border-left:1px dashed #8a8a8a"></div>
<div class="a" style="left:53px;top:287px;width:1px;height:3px;border-left:1px dashed #8a8a8a"></div>
<div class="a" style="left:34px;top:507px;width:1px;height:3px;border-left:1px dashed #8a8a8a"></div>
<div class="a" style="left:34px;top:547px;width:1px;height:3px;border-left:1px dashed #8a8a8a"></div>
<div class="a" style="left:53px;top:567px;width:1px;height:3px;border-left:1px dashed #8a8a8a"></div>
<div class="a" style="left:13px;top:135px;width:0;height:0;border-left:6px solid transparent;border-bottom:6px solid #333"></div>
<svg class="a" style="left:28px;top:130px" width="16" height="16" viewBox="0 0 16 16"><rect x="1.5" y="1.5" width="12" height="10" rx="1" fill="#c9d6f2" stroke="#4a7ad8"/><rect x="3" y="3" width="9" height="7" fill="#a9bbe8"/><rect x="4" y="12" width="7" height="2" fill="#6a9ae8"/></svg>
<div class="t" style="left:48px;top:132.5px;font-size:11.5px">Папки пользователя</div>
<svg class="a" style="left:32px;top:154px" width="6" height="9"><path d="M0.5 0.5 L5.5 4.5 L0.5 8.5Z" fill="#fff" stroke="#8a8a8a"/></svg>
<svg class="a" style="left:47px;top:150px" width="16" height="16" viewBox="0 0 16 16"><defs><linearGradient id="fm" x1="0" y1="0" x2="1" y2="1"><stop offset="0" stop-color="#fff"/><stop offset="1" stop-color="#c4cad8"/></linearGradient></defs><rect x="2.5" y="2" width="13" height="10.5" rx="1" fill="url(#fm)" stroke="#1e3a6a" stroke-width="1.3"/><rect x="1.6" y="1.2" width="14.8" height="12.2" rx="1.5" fill="none" stroke="#9ec0f0" stroke-width=".6"/><circle cx="5.5" cy="10" r="2.6" fill="#f2b23a"/><path d="M1.5 16 Q1.8 12.6 5.5 13 Q9 12.6 8.8 16Z" fill="#6ab0f8"/><path d="M8.5 8.3 h5 v-1.6 h-4z" fill="#101a90"/><ellipse cx="11" cy="11" rx="1.7" ry="2.3" fill="#e0982a"/><path d="M8.2 16.2 Q8.4 12.8 11 13.3 Q14 12.8 14.6 16.2Z" fill="#d82222" stroke="#1e2a4a" stroke-width=".6"/></svg>
<div class="t" style="left:67px;top:152.5px;font-size:11.5px">Госдолг</div>
<div class="a" style="left:32px;top:175px;width:0;height:0;border-left:6px solid transparent;border-bottom:6px solid #333"></div>
<svg class="a" style="left:47px;top:170px" width="16" height="16" viewBox="0 0 16 16"><defs><linearGradient id="fm" x1="0" y1="0" x2="1" y2="1"><stop offset="0" stop-color="#fff"/><stop offset="1" stop-color="#c4cad8"/></linearGradient></defs><rect x="2.5" y="2" width="13" height="10.5" rx="1" fill="url(#fm)" stroke="#1e3a6a" stroke-width="1.3"/><rect x="1.6" y="1.2" width="14.8" height="12.2" rx="1.5" fill="none" stroke="#9ec0f0" stroke-width=".6"/><circle cx="5.5" cy="10" r="2.6" fill="#f2b23a"/><path d="M1.5 16 Q1.8 12.6 5.5 13 Q9 12.6 8.8 16Z" fill="#6ab0f8"/><path d="M8.5 8.3 h5 v-1.6 h-4z" fill="#101a90"/><ellipse cx="11" cy="11" rx="1.7" ry="2.3" fill="#e0982a"/><path d="M8.2 16.2 Q8.4 12.8 11 13.3 Q14 12.8 14.6 16.2Z" fill="#d82222" stroke="#1e2a4a" stroke-width=".6"/></svg>
<div class="t" style="left:67px;top:172.5px;font-size:11.5px">ГосЗадание</div>
<svg class="a" style="left:51px;top:194px" width="6" height="9"><path d="M0.5 0.5 L5.5 4.5 L0.5 8.5Z" fill="#fff" stroke="#8a8a8a"/></svg>
<svg class="a" style="left:66px;top:190px" width="16" height="16" viewBox="0 0 16 16"><path d="M1.5 3.5 h5 l1.5 2 h6.5 v9 h-13z" fill="#f8dc70" stroke="#c8a030"/><rect x="1.5" y="6.5" width="13" height="8" fill="#fbe68a" stroke="#c8a030"/></svg>
<div class="t" style="left:86px;top:192.5px;font-size:11.5px">Аналитические отчеты</div>
<svg class="a" style="left:66px;top:210px" width="16" height="16" viewBox="0 0 16 16"><rect x="1.5" y="1.5" width="13" height="13" fill="#fff" stroke="#3a6ad0"/><rect x="1.5" y="1.5" width="13" height="2.5" fill="#3a6ad0"/><path d="M5.5 4v10M3 7h10M3 10h10" stroke="#3a6ad0"/></svg>
<div class="t" style="left:86px;top:212.5px;font-size:11.5px">00.Утверждение</div>
<svg class="a" style="left:66px;top:230px" width="16" height="16" viewBox="0 0 16 16"><rect x="1.5" y="1.5" width="13" height="13" fill="#fff" stroke="#3a6ad0"/><rect x="1.5" y="1.5" width="13" height="2.5" fill="#3a6ad0"/><path d="M5.5 4v10M3 7h10M3 10h10" stroke="#3a6ad0"/></svg>
<div class="t" style="left:86px;top:232.5px;font-size:11.5px">01.Перечень услуг, работ</div>
<svg class="a" style="left:66px;top:250px" width="16" height="16" viewBox="0 0 16 16"><path d="M2.5 1.5 h7 l3 3 v10.5 h-10z" fill="#fbfcff" stroke="#5a78b0"/><path d="M9.5 1.5 v3 h3" fill="#dde6f4" stroke="#5a78b0"/><path d="M4 5.5h4M4 7.5h6M4 9.5h3M4 11.5h4" stroke="#4a78d8"/><path d="M9.5 8 L15 11.8 L9.5 15.6Z" fill="#1a9a1a"/></svg>
<div class="t" style="left:86px;top:252.5px;font-size:11.5px">Интерактивная схема заполнения ГЗ</div>
<div class="a" style="left:32px;top:275px;width:0;height:0;border-left:6px solid transparent;border-bottom:6px solid #333"></div>
<svg class="a" style="left:47px;top:270px" width="16" height="16" viewBox="0 0 16 16"><defs><linearGradient id="fm" x1="0" y1="0" x2="1" y2="1"><stop offset="0" stop-color="#fff"/><stop offset="1" stop-color="#c4cad8"/></linearGradient></defs><rect x="2.5" y="2" width="13" height="10.5" rx="1" fill="url(#fm)" stroke="#1e3a6a" stroke-width="1.3"/><rect x="1.6" y="1.2" width="14.8" height="12.2" rx="1.5" fill="none" stroke="#9ec0f0" stroke-width=".6"/><circle cx="5.5" cy="10" r="2.6" fill="#f2b23a"/><path d="M1.5 16 Q1.8 12.6 5.5 13 Q9 12.6 8.8 16Z" fill="#6ab0f8"/><path d="M8.5 8.3 h5 v-1.6 h-4z" fill="#101a90"/><ellipse cx="11" cy="11" rx="1.7" ry="2.3" fill="#e0982a"/><path d="M8.2 16.2 Q8.4 12.8 11 13.3 Q14 12.8 14.6 16.2Z" fill="#d82222" stroke="#1e2a4a" stroke-width=".6"/></svg>
<div class="t" style="left:67px;top:272.5px;font-size:11.5px">ГРБС</div>
<svg class="a" style="left:51px;top:294px" width="6" height="9"><path d="M0.5 0.5 L5.5 4.5 L0.5 8.5Z" fill="#fff" stroke="#8a8a8a"/></svg>
<svg class="a" style="left:66px;top:290px" width="16" height="16" viewBox="0 0 16 16"><path d="M1.5 3.5 h5 l1.5 2 h6.5 v9 h-13z" fill="#f8dc70" stroke="#c8a030"/><rect x="1.5" y="6.5" width="13" height="8" fill="#fbe68a" stroke="#c8a030"/></svg>
<div class="t" style="left:86px;top:292.5px;font-size:11.5px">&nbsp;Инструкции</div>
<svg class="a" style="left:51px;top:314px" width="6" height="9"><path d="M0.5 0.5 L5.5 4.5 L0.5 8.5Z" fill="#fff" stroke="#8a8a8a"/></svg>
<svg class="a" style="left:66px;top:310px" width="16" height="16" viewBox="0 0 16 16"><path d="M1.5 3.5 h5 l1.5 2 h6.5 v9 h-13z" fill="#f8dc70" stroke="#c8a030"/><rect x="1.5" y="6.5" width="13" height="8" fill="#fbe68a" stroke="#c8a030"/></svg>
<div class="t" style="left:86px;top:312.5px;font-size:11.5px">Ввод данных</div>
<svg class="a" style="left:51px;top:334px" width="6" height="9"><path d="M0.5 0.5 L5.5 4.5 L0.5 8.5Z" fill="#fff" stroke="#8a8a8a"/></svg>
<svg class="a" style="left:66px;top:330px" width="16" height="16" viewBox="0 0 16 16"><path d="M1.5 3.5 h5 l1.5 2 h6.5 v9 h-13z" fill="#f8dc70" stroke="#c8a030"/><rect x="1.5" y="6.5" width="13" height="8" fill="#fbe68a" stroke="#c8a030"/></svg>
<div class="t" style="left:86px;top:332.5px;font-size:11.5px">ГосЗадание</div>
<svg class="a" style="left:51px;top:354px" width="6" height="9"><path d="M0.5 0.5 L5.5 4.5 L0.5 8.5Z" fill="#fff" stroke="#8a8a8a"/></svg>
<svg class="a" style="left:66px;top:350px" width="16" height="16" viewBox="0 0 16 16"><path d="M1.5 3.5 h5 l1.5 2 h6.5 v9 h-13z" fill="#f8dc70" stroke="#c8a030"/><rect x="1.5" y="6.5" width="13" height="8" fill="#fbe68a" stroke="#c8a030"/></svg>
<div class="t" style="left:86px;top:352.5px;font-size:11.5px">МБО</div>
<svg class="a" style="left:51px;top:374px" width="6" height="9"><path d="M0.5 0.5 L5.5 4.5 L0.5 8.5Z" fill="#fff" stroke="#8a8a8a"/></svg>
<svg class="a" style="left:66px;top:370px" width="16" height="16" viewBox="0 0 16 16"><path d="M1.5 3.5 h5 l1.5 2 h6.5 v9 h-13z" fill="#f8dc70" stroke="#c8a030"/><rect x="1.5" y="6.5" width="13" height="8" fill="#fbe68a" stroke="#c8a030"/></svg>
<div class="t" style="left:86px;top:372.5px;font-size:11.5px">Отчеты</div>
<svg class="a" style="left:66px;top:390px" width="16" height="16" viewBox="0 0 16 16"><path d="M2.5 1.5 h7 l3 3 v10.5 h-10z" fill="#fbfcff" stroke="#5a78b0"/><path d="M9.5 1.5 v3 h3" fill="#dde6f4" stroke="#5a78b0"/><path d="M4 5.5h4M4 7.5h6M4 9.5h3M4 11.5h4" stroke="#4a78d8"/><path d="M9.5 8 L15 11.8 L9.5 15.6Z" fill="#1a9a1a"/></svg>
<div class="t" style="left:86px;top:392.5px;font-size:11.5px;letter-spacing:-0.267px;">СООБЩЕНИЕ от 16.01.14_отчет БЮДЖЕТНАЯ РОСПИ</div>
<svg class="a" style="left:32px;top:414px" width="6" height="9"><path d="M0.5 0.5 L5.5 4.5 L0.5 8.5Z" fill="#fff" stroke="#8a8a8a"/></svg>
<svg class="a" style="left:47px;top:410px" width="16" height="16" viewBox="0 0 16 16"><defs><linearGradient id="fm" x1="0" y1="0" x2="1" y2="1"><stop offset="0" stop-color="#fff"/><stop offset="1" stop-color="#c4cad8"/></linearGradient></defs><rect x="2.5" y="2" width="13" height="10.5" rx="1" fill="url(#fm)" stroke="#1e3a6a" stroke-width="1.3"/><rect x="1.6" y="1.2" width="14.8" height="12.2" rx="1.5" fill="none" stroke="#9ec0f0" stroke-width=".6"/><circle cx="5.5" cy="10" r="2.6" fill="#f2b23a"/><path d="M1.5 16 Q1.8 12.6 5.5 13 Q9 12.6 8.8 16Z" fill="#6ab0f8"/><path d="M8.5 8.3 h5 v-1.6 h-4z" fill="#101a90"/><ellipse cx="11" cy="11" rx="1.7" ry="2.3" fill="#e0982a"/><path d="M8.2 16.2 Q8.4 12.8 11 13.3 Q14 12.8 14.6 16.2Z" fill="#d82222" stroke="#1e2a4a" stroke-width=".6"/></svg>
<div class="t" style="left:67px;top:412.5px;font-size:11.5px">Доходы</div>
<svg class="a" style="left:32px;top:434px" width="6" height="9"><path d="M0.5 0.5 L5.5 4.5 L0.5 8.5Z" fill="#fff" stroke="#8a8a8a"/></svg>
<svg class="a" style="left:47px;top:430px" width="16" height="16" viewBox="0 0 16 16"><defs><linearGradient id="fm" x1="0" y1="0" x2="1" y2="1"><stop offset="0" stop-color="#fff"/><stop offset="1" stop-color="#c4cad8"/></linearGradient></defs><rect x="2.5" y="2" width="13" height="10.5" rx="1" fill="url(#fm)" stroke="#1e3a6a" stroke-width="1.3"/><rect x="1.6" y="1.2" width="14.8" height="12.2" rx="1.5" fill="none" stroke="#9ec0f0" stroke-width=".6"/><circle cx="5.5" cy="10" r="2.6" fill="#f2b23a"/><path d="M1.5 16 Q1.8 12.6 5.5 13 Q9 12.6 8.8 16Z" fill="#6ab0f8"/><path d="M8.5 8.3 h5 v-1.6 h-4z" fill="#101a90"/><ellipse cx="11" cy="11" rx="1.7" ry="2.3" fill="#e0982a"/><path d="M8.2 16.2 Q8.4 12.8 11 13.3 Q14 12.8 14.6 16.2Z" fill="#d82222" stroke="#1e2a4a" stroke-width=".6"/></svg>
<div class="t" style="left:67px;top:432.5px;font-size:11.5px">МБО</div>
<svg class="a" style="left:32px;top:454px" width="6" height="9"><path d="M0.5 0.5 L5.5 4.5 L0.5 8.5Z" fill="#fff" stroke="#8a8a8a"/></svg>
<svg class="a" style="left:47px;top:450px" width="16" height="16" viewBox="0 0 16 16"><defs><linearGradient id="fm" x1="0" y1="0" x2="1" y2="1"><stop offset="0" stop-color="#fff"/><stop offset="1" stop-color="#c4cad8"/></linearGradient></defs><rect x="2.5" y="2" width="13" height="10.5" rx="1" fill="url(#fm)" stroke="#1e3a6a" stroke-width="1.3"/><rect x="1.6" y="1.2" width="14.8" height="12.2" rx="1.5" fill="none" stroke="#9ec0f0" stroke-width=".6"/><circle cx="5.5" cy="10" r="2.6" fill="#f2b23a"/><path d="M1.5 16 Q1.8 12.6 5.5 13 Q9 12.6 8.8 16Z" fill="#6ab0f8"/><path d="M8.5 8.3 h5 v-1.6 h-4z" fill="#101a90"/><ellipse cx="11" cy="11" rx="1.7" ry="2.3" fill="#e0982a"/><path d="M8.2 16.2 Q8.4 12.8 11 13.3 Q14 12.8 14.6 16.2Z" fill="#d82222" stroke="#1e2a4a" stroke-width=".6"/></svg>
<div class="t" style="left:67px;top:452.5px;font-size:11.5px">Расходы</div>
<svg class="a" style="left:32px;top:474px" width="6" height="9"><path d="M0.5 0.5 L5.5 4.5 L0.5 8.5Z" fill="#fff" stroke="#8a8a8a"/></svg>
<svg class="a" style="left:47px;top:470px" width="16" height="16" viewBox="0 0 16 16"><defs><linearGradient id="fm" x1="0" y1="0" x2="1" y2="1"><stop offset="0" stop-color="#fff"/><stop offset="1" stop-color="#c4cad8"/></linearGradient></defs><rect x="2.5" y="2" width="13" height="10.5" rx="1" fill="url(#fm)" stroke="#1e3a6a" stroke-width="1.3"/><rect x="1.6" y="1.2" width="14.8" height="12.2" rx="1.5" fill="none" stroke="#9ec0f0" stroke-width=".6"/><circle cx="5.5" cy="10" r="2.6" fill="#f2b23a"/><path d="M1.5 16 Q1.8 12.6 5.5 13 Q9 12.6 8.8 16Z" fill="#6ab0f8"/><path d="M8.5 8.3 h5 v-1.6 h-4z" fill="#101a90"/><ellipse cx="11" cy="11" rx="1.7" ry="2.3" fill="#e0982a"/><path d="M8.2 16.2 Q8.4 12.8 11 13.3 Q14 12.8 14.6 16.2Z" fill="#d82222" stroke="#1e2a4a" stroke-width=".6"/></svg>
<div class="t" style="left:67px;top:472.5px;font-size:11.5px">СБП</div>
<div class="a" style="left:13px;top:495px;width:0;height:0;border-left:6px solid transparent;border-bottom:6px solid #333"></div>
<svg class="a" style="left:28px;top:490px" width="16" height="16" viewBox="0 0 16 16"><rect x="0.5" y="1.5" width="4.5" height="13" fill="#f05a2a" stroke="#b03010" stroke-width=".8"/><rect x="5.5" y="3.5" width="4.5" height="11" fill="#4a7ae8" stroke="#2a4ab0" stroke-width=".8"/><rect x="10.5" y="5.5" width="4.5" height="9" fill="#3ac84a" stroke="#1a8a2a" stroke-width=".8"/><path d="M2.7 3v10M7.7 5v8M12.7 7v6" stroke="#fff" stroke-width=".9" opacity=".85"/></svg>
<div class="t" style="left:48px;top:492.5px;font-size:11.5px">Версии</div>
<svg class="a" style="left:32px;top:514px" width="6" height="9"><path d="M0.5 0.5 L5.5 4.5 L0.5 8.5Z" fill="#fff" stroke="#8a8a8a"/></svg>
<div class="a" style="left:47px;top:512px;width:12px;height:12px;border:1px solid #9aa;background:linear-gradient(#eee,#ddd)"></div>
<svg class="a" style="left:63px;top:510px" width="16" height="16" viewBox="0 0 16 16"><rect x="0.5" y="1.5" width="4.5" height="13" fill="#f05a2a" stroke="#b03010" stroke-width=".8"/><rect x="5.5" y="3.5" width="4.5" height="11" fill="#4a7ae8" stroke="#2a4ab0" stroke-width=".8"/><rect x="10.5" y="5.5" width="4.5" height="9" fill="#3ac84a" stroke="#1a8a2a" stroke-width=".8"/><path d="M2.7 3v10M7.7 5v8M12.7 7v6" stroke="#fff" stroke-width=".9" opacity=".85"/></svg>
<div class="t" style="left:83px;top:512.5px;font-size:11.5px">Бюджет (2014-2016)</div>
<div class="a" style="left:13px;top:535px;width:0;height:0;border-left:6px solid transparent;border-bottom:6px solid #333"></div>
<svg class="a" style="left:28px;top:530px" width="16" height="16" viewBox="0 0 16 16"><rect x="0.5" y="0.5" width="11" height="9" fill="#fff" stroke="#2a4ab0"/><rect x="0.5" y="0.5" width="11" height="2" fill="#2a4ab0"/><rect x="3.5" y="3.5" width="11" height="9" fill="#f4f8ff" stroke="#2a4ab0"/><rect x="3.5" y="3.5" width="11" height="2" fill="#2a4ab0"/><path d="M4.25 9 V14 A3.25 1.6 0 0 0 10.75 14 V9" fill="#f6c63a" stroke="#6a5010" stroke-width=".8"/><ellipse cx="7.5" cy="9" rx="3.25" ry="1.6" fill="#fde48a" stroke="#6a5010" stroke-width=".8"/></svg>
<div class="t" style="left:48px;top:532.5px;font-size:11.5px">Проекты</div>
<div class="a" style="left:32px;top:555px;width:0;height:0;border-left:6px solid transparent;border-bottom:6px solid #333"></div>
<svg class="a" style="left:47px;top:550px" width="16" height="16" viewBox="0 0 16 16"><rect x="4.5" y="0.5" width="11" height="13" fill="#fff" stroke="#1a3a9a"/><rect x="4.5" y="0.5" width="11" height="2.5" fill="#2a5ad0"/><text x="9.5" y="12.5" font-family="Liberation Serif" font-weight="bold" font-style="italic" font-size="8" fill="#1a3aa0">A</text><path d="M1.0 8.5 V14.0 A3.5 1.6 0 0 0 8.0 14.0 V8.5" fill="#f6c63a" stroke="#6a5010" stroke-width=".8"/><ellipse cx="4.5" cy="8.5" rx="3.5" ry="1.6" fill="#fde48a" stroke="#6a5010" stroke-width=".8"/></svg>
<div class="t" style="left:67px;top:552.5px;font-size:11.5px">ГЗ</div>
<svg class="a" style="left:51px;top:574px" width="6" height="9"><path d="M0.5 0.5 L5.5 4.5 L0.5 8.5Z" fill="#fff" stroke="#8a8a8a"/></svg>
<svg class="a" style="left:66px;top:570px" width="16" height="16" viewBox="0 0 16 16"><path d="M8 0.5 L11.5 4 L8 7.5 L4.5 4Z" fill="#e83a3a" stroke="#a01a1a" stroke-width=".5"/><path d="M8 7.5 V9.5 M3.5 9.5 H12.5 M3.5 9.5v1 M12.5 9.5v1" stroke="#6a7a9a"/><rect x="0.5" y="10.5" width="6" height="5" fill="#3ab83a" stroke="#1a7a1a" stroke-width=".7"/><rect x="9.5" y="10.5" width="6" height="5" fill="#3ab83a" stroke="#1a7a1a" stroke-width=".7"/></svg>
<div class="t" style="left:86px;top:572.5px;font-size:11.5px">Алгоритм</div>
<svg class="a" style="left:66px;top:590px" width="16" height="16" viewBox="0 0 16 16"><path d="M2.5 1.5 h7 l3 3 v10.5 h-10z" fill="#fbfcff" stroke="#5a78b0"/><path d="M9.5 1.5 v3 h3" fill="#dde6f4" stroke="#5a78b0"/><path d="M4 5.5h4M4 7.5h6M4 9.5h3M4 11.5h4" stroke="#4a78d8"/><path d="M9.5 8 L15 11.8 L9.5 15.6Z" fill="#1a9a1a"/></svg>
<div class="t" style="left:86px;top:592.5px;font-size:11.5px">Анализ расчетов</div>
<svg class="a" style="left:66px;top:610px" width="16" height="16" viewBox="0 0 16 16"><path d="M2.5 1.5 h7 l3 3 v10.5 h-10z" fill="#fbfcff" stroke="#5a78b0"/><path d="M9.5 1.5 v3 h3" fill="#dde6f4" stroke="#5a78b0"/><path d="M4 5.5h4M4 7.5h6M4 9.5h3M4 11.5h4" stroke="#4a78d8"/><path d="M9.5 8 L15 11.8 L9.5 15.6Z" fill="#1a9a1a"/></svg>
<div class="t" style="left:86px;top:612.5px;font-size:11.5px">Государственное задание</div>
<svg class="a" style="left:66px;top:630px" width="16" height="16" viewBox="0 0 16 16"><path d="M2.5 1.5 h7 l3 3 v10.5 h-10z" fill="#fbfcff" stroke="#5a78b0"/><path d="M9.5 1.5 v3 h3" fill="#dde6f4" stroke="#5a78b0"/><path d="M4 5.5h4M4 7.5h6M4 9.5h3M4 11.5h4" stroke="#4a78d8"/><path d="M9.5 8 L15 11.8 L9.5 15.6Z" fill="#1a9a1a"/></svg>
<div class="t" style="left:86px;top:632.5px;font-size:11.5px">Интерактивная схема заполнения ГЗ</div>
<svg class="a" style="left:66px;top:650px" width="16" height="16" viewBox="0 0 16 16"><path d="M2.5 1.5 h7 l3 3 v10.5 h-10z" fill="#fbfcff" stroke="#5a78b0"/><path d="M9.5 1.5 v3 h3" fill="#dde6f4" stroke="#5a78b0"/><path d="M4 5.5h4M4 7.5h6M4 9.5h3M4 11.5h4" stroke="#4a78d8"/><path d="M9.5 8 L15 11.8 L9.5 15.6Z" fill="#1a9a1a"/></svg>
<div class="t" style="left:86px;top:652.5px;font-size:11.5px">Исполнение государственного задания</div>
<svg class="a" style="left:66px;top:670px" width="16" height="16" viewBox="0 0 16 16"><path d="M2.5 1.5 h7 l3 3 v10.5 h-10z" fill="#fbfcff" stroke="#5a78b0"/><path d="M9.5 1.5 v3 h3" fill="#dde6f4" stroke="#5a78b0"/><path d="M4 5.5h4M4 7.5h6M4 9.5h3M4 11.5h4" stroke="#4a78d8"/><path d="M9.5 8 L15 11.8 L9.5 15.6Z" fill="#1a9a1a"/></svg>
<div class="t" style="left:86px;top:672.5px;font-size:11.5px">Прогноз сводных показателей</div>
<svg class="a" style="left:66px;top:690px" width="16" height="16" viewBox="0 0 16 16"><path d="M2.5 1.5 h7 l3 3 v10.5 h-10z" fill="#fbfcff" stroke="#5a78b0"/><path d="M9.5 1.5 v3 h3" fill="#dde6f4" stroke="#5a78b0"/><path d="M4 5.5h4M4 7.5h6M4 9.5h3M4 11.5h4" stroke="#4a78d8"/><path d="M9.5 8 L15 11.8 L9.5 15.6Z" fill="#1a9a1a"/></svg>
<div class="t" style="left:86px;top:692.5px;font-size:11.5px">Расчет нормативных затрат</div>
<svg class="a" style="left:66px;top:710px" width="16" height="16" viewBox="0 0 16 16"><path d="M2.5 1.5 h7 l3 3 v10.5 h-10z" fill="#fbfcff" stroke="#5a78b0"/><path d="M9.5 1.5 v3 h3" fill="#dde6f4" stroke="#5a78b0"/><path d="M4 5.5h4M4 7.5h6M4 9.5h3M4 11.5h4" stroke="#4a78d8"/><path d="M9.5 8 L15 11.8 L9.5 15.6Z" fill="#1a9a1a"/></svg>
<div class="t" style="left:86px;top:712.5px;font-size:11.5px">Расчеты финансового обеспечения</div>
<svg class="a" style="left:66px;top:730px" width="16" height="16" viewBox="0 0 16 16"><path d="M2.5 1.5 h7 l3 3 v10.5 h-10z" fill="#fbfcff" stroke="#5a78b0"/><path d="M9.5 1.5 v3 h3" fill="#dde6f4" stroke="#5a78b0"/><path d="M4 5.5h4M4 7.5h6M4 9.5h3M4 11.5h4" stroke="#4a78d8"/><path d="M9.5 8 L15 11.8 L9.5 15.6Z" fill="#1a9a1a"/></svg>
<div class="t" style="left:86px;top:732.5px;font-size:11.5px">Реестр ГУ(Р)</div>
<svg class="a" style="left:47px;top:750px" width="16" height="16" viewBox="0 0 16 16"><rect x="4.5" y="0.5" width="11" height="13" fill="#fff" stroke="#1a3a9a"/><rect x="4.5" y="0.5" width="11" height="2.5" fill="#2a5ad0"/><path d="M1.0 7.5 V14.0 A3.5 1.6 0 0 0 8.0 14.0 V7.5" fill="#f6c63a" stroke="#6a5010" stroke-width=".8"/><ellipse cx="4.5" cy="7.5" rx="3.5" ry="1.6" fill="#fde48a" stroke="#6a5010" stroke-width=".8"/></svg>
<div class="t" style="left:67px;top:752.5px;font-size:11.5px">Документы БКС</div>
<svg class="a" style="left:32px;top:774px" width="6" height="9"><path d="M0.5 0.5 L5.5 4.5 L0.5 8.5Z" fill="#fff" stroke="#8a8a8a"/></svg>
<svg class="a" style="left:47px;top:770px" width="16" height="16" viewBox="0 0 16 16"><rect x="4.5" y="0.5" width="11" height="13" fill="#fff" stroke="#1a3a9a"/><rect x="4.5" y="0.5" width="11" height="2.5" fill="#2a5ad0"/><text x="9.5" y="12.5" font-family="Liberation Serif" font-weight="bold" font-style="italic" font-size="8" fill="#1a3aa0">A</text><path d="M1.0 8.5 V14.0 A3.5 1.6 0 0 0 8.0 14.0 V8.5" fill="#f6c63a" stroke="#6a5010" stroke-width=".8"/><ellipse cx="4.5" cy="8.5" rx="3.5" ry="1.6" fill="#fde48a" stroke="#6a5010" stroke-width=".8"/></svg>
<div class="t" style="left:67px;top:772.5px;font-size:11.5px">МБО</div>
<svg class="a" style="left:32px;top:794px" width="6" height="9"><path d="M0.5 0.5 L5.5 4.5 L0.5 8.5Z" fill="#fff" stroke="#8a8a8a"/></svg>
<svg class="a" style="left:47px;top:790px" width="16" height="16" viewBox="0 0 16 16"><rect x="4.5" y="0.5" width="11" height="13" fill="#fff" stroke="#1a3a9a"/><rect x="4.5" y="0.5" width="11" height="2.5" fill="#2a5ad0"/><text x="9.5" y="12.5" font-family="Liberation Serif" font-weight="bold" font-style="italic" font-size="8" fill="#1a3aa0">A</text><path d="M1.0 8.5 V14.0 A3.5 1.6 0 0 0 8.0 14.0 V8.5" fill="#f6c63a" stroke="#6a5010" stroke-width=".8"/><ellipse cx="4.5" cy="8.5" rx="3.5" ry="1.6" fill="#fde48a" stroke="#6a5010" stroke-width=".8"/></svg>
<div class="t" style="left:67px;top:792.5px;font-size:11.5px">Прогнозирование доходов 2014-2016 гг.</div>
<svg class="a" style="left:32px;top:814px" width="6" height="9"><path d="M0.5 0.5 L5.5 4.5 L0.5 8.5Z" fill="#fff" stroke="#8a8a8a"/></svg>
<svg class="a" style="left:47px;top:810px" width="16" height="16" viewBox="0 0 16 16"><rect x="4.5" y="0.5" width="11" height="13" fill="#fff" stroke="#1a3a9a"/><rect x="4.5" y="0.5" width="11" height="2.5" fill="#2a5ad0"/><text x="9.5" y="12.5" font-family="Liberation Serif" font-weight="bold" font-style="italic" font-size="8" fill="#1a3aa0">A</text><path d="M1.0 8.5 V14.0 A3.5 1.6 0 0 0 8.0 14.0 V8.5" fill="#f6c63a" stroke="#6a5010" stroke-width=".8"/><ellipse cx="4.5" cy="8.5" rx="3.5" ry="1.6" fill="#fde48a" stroke="#6a5010" stroke-width=".8"/></svg>
<div class="t" style="left:67px;top:812.5px;font-size:11.5px">Проект бюджета (2014-2016)</div>
<svg class="a" style="left:32px;top:834px" width="6" height="9"><path d="M0.5 0.5 L5.5 4.5 L0.5 8.5Z" fill="#fff" stroke="#8a8a8a"/></svg>
<svg class="a" style="left:47px;top:830px" width="16" height="16" viewBox="0 0 16 16"><rect x="4.5" y="0.5" width="11" height="13" fill="#fff" stroke="#1a3a9a"/><rect x="4.5" y="0.5" width="11" height="2.5" fill="#2a5ad0"/><text x="9.5" y="12.5" font-family="Liberation Serif" font-weight="bold" font-style="italic" font-size="8" fill="#1a3aa0">A</text><path d="M1.0 8.5 V14.0 A3.5 1.6 0 0 0 8.0 14.0 V8.5" fill="#f6c63a" stroke="#6a5010" stroke-width=".8"/><ellipse cx="4.5" cy="8.5" rx="3.5" ry="1.6" fill="#fde48a" stroke="#6a5010" stroke-width=".8"/></svg>
<div class="t" style="left:67px;top:832.5px;font-size:11.5px">Проект бюджета (2015-2017)</div>
<svg class="a" style="left:32px;top:854px" width="6" height="9"><path d="M0.5 0.5 L5.5 4.5 L0.5 8.5Z" fill="#fff" stroke="#8a8a8a"/></svg>
<svg class="a" style="left:47px;top:850px" width="16" height="16" viewBox="0 0 16 16"><rect x="4.5" y="0.5" width="11" height="13" fill="#fff" stroke="#1a3a9a"/><rect x="4.5" y="0.5" width="11" height="2.5" fill="#2a5ad0"/><text x="9.5" y="12.5" font-family="Liberation Serif" font-weight="bold" font-style="italic" font-size="8" fill="#1a3aa0">A</text><path d="M1.0 8.5 V14.0 A3.5 1.6 0 0 0 8.0 14.0 V8.5" fill="#f6c63a" stroke="#6a5010" stroke-width=".8"/><ellipse cx="4.5" cy="8.5" rx="3.5" ry="1.6" fill="#fde48a" stroke="#6a5010" stroke-width=".8"/></svg>
<div class="t" style="left:67px;top:852.5px;font-size:11.5px">Проект бюджета с поправками</div>
</div>

<div class="a" style="left:393px;top:69px;width:887px;height:896px;background:#f3f1ee"></div>
<div class="a" style="left:393px;top:70px;width:2px;height:895px;background:#1b3a6b"></div>
<div class="a" style="left:395px;top:70px;width:3px;height:895px;background:#98bae8"></div>
<div class="a" style="left:398px;top:70px;width:1px;height:895px;background:#1b3a6b"></div>
<div class="a" style="left:1278px;top:69px;width:2px;height:896px;background:#9bb9df"></div>
<div class="a" style="left:0px;top:69px;width:1280px;height:1px;background:#7aa0d8"></div>
<div class="a" style="left:399px;top:70px;width:881px;height:1px;background:#c9c9c9"></div>
<div class="a" style="left:400px;top:71px;width:878px;height:25px;background:#bed8fa"></div>
<div class="a" style="left:399px;top:95px;width:879px;height:1px;background:#8fb2e0"></div>
<div class="a" style="left:401px;top:73px;width:166px;height:23px;background:#cadcf4;border-radius:3px 3px 0 0"></div>
<div class="a" style="left:572px;top:74px;width:282px;height:22px;background:linear-gradient(#fafcff,#e3ecf8);border:1px solid #a9c3e6;border-bottom:none;border-radius:3px 3px 0 0"></div>
<div class="a" style="left:860px;top:73px;width:184px;height:23px;background:#cadcf4;border-radius:3px 3px 0 0"></div>
<svg class="a" style="left:405px;top:77px" width="16" height="16" viewBox="0 0 16 16"><rect x="7.5" y="6.5" width="7" height="9" fill="#f4f4f4" stroke="#333"/><rect x="4.5" y="4.5" width="7" height="9" fill="#f4f4f4" stroke="#333"/><rect x="1.5" y="1.5" width="7" height="9" fill="#fafafa" stroke="#333"/><path d="M2.5 4.5 L5 2" stroke="#2a5ad0" stroke-width="1.5"/><path d="M3 6.5h4M3 8.5h4M9.5 9.5h1M9.5 11.5h1M12 13.5h1" stroke="#7a8aa0"/></svg>
<svg class="a" style="left:576px;top:77px" width="16" height="16" viewBox="0 0 16 16"><path d="M2.5 1.5 h7 l3 3 v10.5 h-10z" fill="#fbfcff" stroke="#5a78b0"/><path d="M9.5 1.5 v3 h3" fill="#dde6f4" stroke="#5a78b0"/><path d="M4 5.5h4M4 7.5h6M4 9.5h3M4 11.5h4" stroke="#4a78d8"/><path d="M9.5 8 L15 11.8 L9.5 15.6Z" fill="#1a9a1a"/></svg>
<svg class="a" style="left:864px;top:77px" width="16" height="16" viewBox="0 0 16 16"><rect x="6" y="1" width="8" height="8" fill="#f8d040" stroke="#c09020"/><rect x="1" y="5" width="6" height="6" fill="#e03a2a" stroke="#902010"/><rect x="6" y="9" width="8" height="6" fill="#3a6ad0" stroke="#1a3a90"/></svg>
<div class="t" style="left:423px;top:80.5px;font-size:11.5px;color:#1e3a78;letter-spacing:-0.041px;">Список справочников</div>
<div class="t" style="left:593px;top:80.5px;font-size:11.5px;color:#1e3a78;letter-spacing:-0.046px;">Отчет: Интерактивная схема заполнения ГЗ</div>
<div class="t" style="left:881px;top:80.5px;font-size:11.5px;color:#1e3a78;letter-spacing:0.092px;">01.Перечень услуг, работ</div>
<svg class="a" style="left:547px;top:79px" width="10" height="10" viewBox="0 0 10 10"><path d="M1.5 1.5 L8.5 8.5 M8.5 1.5 L1.5 8.5" stroke="#7a8ca8" stroke-width="2.2"/></svg>
<svg class="a" style="left:836px;top:79px" width="10" height="10" viewBox="0 0 10 10"><path d="M1.5 1.5 L8.5 8.5 M8.5 1.5 L1.5 8.5" stroke="#7a8ca8" stroke-width="2.2"/></svg>
<svg class="a" style="left:1025px;top:79px" width="10" height="10" viewBox="0 0 10 10"><path d="M1.5 1.5 L8.5 8.5 M8.5 1.5 L1.5 8.5" stroke="#7a8ca8" stroke-width="2.2"/></svg>
<div class="a" style="left:1265px;top:81px;border-left:5px solid transparent;border-right:5px solid transparent;border-top:5px solid #1e3c78"></div>
<div class="a" style="left:403px;top:96px;width:875px;height:35px;background:#d7e6f4"></div>
<div class="t" style="left:412px;top:108.5px;font-size:11.5px;letter-spacing:-0.341px;">Имя отчета:</div>
<div class="a" style="left:483px;top:102px;width:326px;height:21px;background:#eff1f4;border:1px solid #b3c6e0"></div>
<div class="t" style="left:489px;top:107.5px;font-size:11.5px;color:#a9a49c;letter-spacing:-0.029px;">Интерактивная схема заполнения ГЗ</div>
<div class="t" style="left:819px;top:108.5px;font-size:11.5px;letter-spacing:-0.195px;">Настройка просмотра:</div>
<div class="a" style="left:945px;top:102px;width:328px;height:21px;background:#eef4fc;border:1px solid #b3c6e0"></div>
<svg class="a" style="left:947px;top:104px" width="16" height="16" viewBox="0 0 16 16"><rect x="1" y="1" width="14" height="14" rx="1" fill="#2a5ad0"/><rect x="3.5" y="1.5" width="9" height="6" fill="#f4f6fa"/><rect x="4.5" y="10" width="7" height="5" fill="#e8eaf0"/><rect x="6" y="11" width="2" height="3" fill="#2a3a6a"/></svg>
<div class="t" style="left:971px;top:107.5px;font-size:11.5px;letter-spacing:-0.159px;">Новая настройка (Афанасьева 14.01.2014 13:48:35)</div>
<div class="a" style="left:1254px;top:105px;width:14px;height:14px;background:#f4f8fd;border:1px solid #4a6ac0"><div class="a" style="left:2px;top:2px;width:3px;height:3px;background:#3a6ad0"></div><div class="a" style="left:7px;top:2px;width:3px;height:3px;background:#3a6ad0"></div><div class="a" style="left:2px;top:6px;width:3px;height:5px;background:#3a6ad0"></div><div class="a" style="left:7px;top:6px;width:3px;height:5px;background:#3a6ad0"></div></div>
<div class="a" style="left:403px;top:131px;width:875px;height:22px;background:#bedafc"></div>
<div class="a" style="left:406px;top:132px;width:78px;height:22px;background:linear-gradient(#f4f8fe,#dce8f8);border:1px solid #a9c3e6;border-bottom:none;border-radius:3px 3px 0 0"></div>
<svg class="a" style="left:409px;top:136px" width="14" height="14" viewBox="0 0 14 14"><rect x="0.5" y="0.5" width="13" height="13" fill="#fff" stroke="#3a5ab0"/><rect x="0.5" y="0.5" width="13" height="2" fill="#3a5ab0"/><rect x="3" y="4" width="3" height="3" fill="#6a6ab0"/><rect x="8" y="4" width="3" height="3" fill="#5a7ab0"/><rect x="3" y="9" width="3" height="3" fill="#f0c020"/><rect x="8" y="9" width="3" height="3" fill="#2aa02a"/></svg>
<div class="t" style="left:426px;top:137.5px;font-size:11.5px;color:#1e3a78;letter-spacing:0.309px;">Просмотр</div>
<div class="a" style="left:404px;top:153px;width:874px;height:91px;background:#bfdafd;border-top:1px solid #8fb2e0"></div>
<div class="a" style="left:1135px;top:154px;width:1px;height:90px;background:#e6f0fc"></div>
<div class="t" style="left:417px;top:164.5px;font-size:11.5px;letter-spacing:0.133px;">Дата</div>
<div class="t" style="left:565px;top:164.5px;font-size:11.5px;letter-spacing:-0.312px;">Версия</div>
<div class="t" style="left:417px;top:191.5px;font-size:11.5px;letter-spacing:-0.358px;">Ведомство</div>
<div class="t" style="left:417px;top:218.5px;font-size:11.5px;letter-spacing:-0.394px;">Учреждение</div>
<div class="a" style="left:452px;top:164px;width:99px;height:20px;background:#e6eff9;border:1px solid #a7c0e0"></div><div class="t" style="left:456px;top:168.5px;font-size:11.5px;letter-spacing:-0.256px;">29.01.2014</div><div class="a" style="left:539px;top:173px;border-left:4px solid transparent;border-right:4px solid transparent;border-top:4px solid #4a6a9a"></div>
<div class="a" style="left:611px;top:164px;width:159px;height:20px;background:#e6eff9;border:1px solid #a7c0e0"></div><div class="t" style="left:618px;top:168.5px;font-size:11.5px;letter-spacing:-0.088px;">2-е изменение бюджета</div><div class="a" style="left:758px;top:173px;border-left:4px solid transparent;border-right:4px solid transparent;border-top:4px solid #4a6a9a"></div>
<div class="a" style="left:482px;top:190px;width:338px;height:21px;background:#e6eff9;border:1px solid #a7c0e0;overflow:hidden"></div>
<div class="t" style="left:489px;top:195.5px;font-size:11.5px;letter-spacing:0.112px;clip-path:inset(0 0 0 0);">Министерство образования и науки Удмуртской Республик</div>
<div class="a" style="left:801px;top:193px;width:18px;height:16px;background:#e6eff9"></div>
<div class="a" style="left:808px;top:200px;border-left:4px solid transparent;border-right:4px solid transparent;border-top:4px solid #4a6a9a"></div>
<div class="a" style="left:489px;top:217px;width:311px;height:21px;background:#e6eff9;border:1px solid #a7c0e0"></div>
<div class="t" style="left:496px;top:223.5px;font-size:11.5px;letter-spacing:-0.067px;">АОУ СПО УР "Техникум радиоэлектроники и информа</div>
<div class="a" style="left:781px;top:220px;width:18px;height:16px;background:#e6eff9"></div>
<div class="a" style="left:788px;top:227px;border-left:4px solid transparent;border-right:4px solid transparent;border-top:4px solid #4a6a9a"></div>
<div class="a" style="left:1141px;top:163px;width:84px;height:25px;background:linear-gradient(#dfeafa,#c6d9f2);border:1px solid #8aa6cc;border-radius:2px"></div>
<svg class="a" style="left:1145px;top:167px" width="16" height="16" viewBox="0 0 16 16"><path d="M2.5 1.5 h7 l3 3 v10.5 h-10z" fill="#fbfcff" stroke="#5a78b0"/><path d="M9.5 1.5 v3 h3" fill="#dde6f4" stroke="#5a78b0"/><path d="M4 5.5h4M4 7.5h6M4 9.5h3M4 11.5h4" stroke="#4a78d8"/><path d="M9.5 8 L15 11.8 L9.5 15.6Z" fill="#1a9a1a"/></svg>
<div class="t" style="left:1163px;top:170.5px;font-size:11.5px;color:#1e3a78;letter-spacing:-0.340px;">Выполнить</div>
<div class="a" style="left:403px;top:244px;width:1px;height:640px;background:#98bae8"></div>
<div class="a" style="left:404px;top:244px;width:857px;height:624px;background:#d7e6f5;overflow:hidden"><div class="a" style="left:-404px;top:-244px;width:1280px;height:1024px">
<div class="a" style="left:422px;top:257px;width:797px;height:700px;background:#fff;border-left:1px solid #1f1a6e;border-top:1px solid #1f1a6e"></div>
<div class="a" style="left:1218px;top:258px;width:3px;height:700px;background:#1f1a6e"></div>
<div class="a" style="left:1218px;top:257px;width:1px;height:2px;background:#1f1a6e"></div>
<div class="a" style="left:459px;top:294px;width:740px;height:700px;border:1px dotted #c8c8c8"></div>
<div class="t" style="left:621px;top:304px;font-size:19px;font-weight:bold;font-family:'Liberation Serif', serif;letter-spacing:0.165px;">Интерактивная схема государственного задания</div>
<div class="a" style="left:460px;top:334px;width:746px;height:288px;background:#fff"></div>
<div class="a" style="left:593px;top:335px;width:613px;height:26px;background:#f5e2d4"></div>
<div class="a" style="left:593px;top:391px;width:613px;height:35px;background:#acd7e6"></div>
<div class="a" style="left:460px;top:427px;width:746px;height:35px;background:#fee9d0"></div>
<div class="a" style="left:593px;top:547px;width:613px;height:75px;background:#92ee90"></div>
<div class="a" style="left:460px;top:334px;width:746px;height:1px;background:#000"></div>
<div class="a" style="left:460px;top:361px;width:746px;height:1px;background:#000"></div>
<div class="a" style="left:460px;top:390px;width:746px;height:1px;background:#000"></div>
<div class="a" style="left:460px;top:426px;width:746px;height:1px;background:#000"></div>
<div class="a" style="left:460px;top:462px;width:746px;height:1px;background:#000"></div>
<div class="a" style="left:460px;top:480px;width:746px;height:1px;background:#000"></div>
<div class="a" style="left:460px;top:527px;width:746px;height:1px;background:#000"></div>
<div class="a" style="left:460px;top:546px;width:746px;height:1px;background:#000"></div>
<div class="a" style="left:460px;top:583px;width:746px;height:1px;background:#000"></div>
<div class="a" style="left:460px;top:622px;width:746px;height:1px;background:#000"></div>
<div class="a" style="left:460px;top:334px;width:1px;height:289px;background:#000"></div>
<div class="a" style="left:1205px;top:334px;width:1px;height:289px;background:#000"></div>
<div class="a" style="left:592px;top:334px;width:1px;height:128px;background:#000"></div>
<div class="a" style="left:592px;top:480px;width:1px;height:47px;background:#000"></div>
<div class="a" style="left:592px;top:546px;width:1px;height:76px;background:#000"></div>
<div class="a" style="left:687px;top:390px;width:1px;height:36px;background:#000"></div>
<div class="a" style="left:829px;top:390px;width:1px;height:36px;background:#000"></div>
<div class="a" style="left:923px;top:390px;width:1px;height:36px;background:#000"></div>
<div class="a" style="left:1018px;top:390px;width:1px;height:36px;background:#000"></div>
<div class="a" style="left:1112px;top:390px;width:1px;height:36px;background:#000"></div>
<div class="a" style="left:640px;top:462px;width:1px;height:65px;background:#000"></div>
<div class="a" style="left:687px;top:462px;width:1px;height:65px;background:#000"></div>
<div class="a" style="left:734px;top:462px;width:1px;height:65px;background:#000"></div>
<div class="a" style="left:781px;top:462px;width:1px;height:65px;background:#000"></div>
<div class="a" style="left:829px;top:462px;width:1px;height:65px;background:#000"></div>
<div class="a" style="left:876px;top:462px;width:1px;height:65px;background:#000"></div>
<div class="a" style="left:923px;top:462px;width:1px;height:65px;background:#000"></div>
<div class="a" style="left:970px;top:462px;width:1px;height:65px;background:#000"></div>
<div class="a" style="left:1018px;top:462px;width:1px;height:65px;background:#000"></div>
<div class="a" style="left:1065px;top:462px;width:1px;height:65px;background:#000"></div>
<div class="a" style="left:1112px;top:462px;width:1px;height:65px;background:#000"></div>
<div class="a" style="left:1159px;top:462px;width:1px;height:65px;background:#000"></div>
<div class="a" style="left:1112px;top:546px;width:1px;height:76px;background:#000"></div>
<div class="t" style="left:463px;top:343px;font-size:16px;font-weight:bold;font-family:'Liberation Serif', serif;letter-spacing:0.092px;">Ведомство:</div>
<div class="t" style="left:595px;top:343px;font-size:16px;font-weight:bold;font-family:'Liberation Serif', serif;letter-spacing:0.031px;">Министерство образования и науки Удмуртской Республики</div>
<div class="t" style="left:463px;top:372px;font-size:16px;font-weight:bold;font-family:'Liberation Serif', serif;letter-spacing:-0.003px;">Корреспондент:</div>
<div class="t" style="left:595px;top:372px;font-size:16px;font-weight:bold;font-family:'Liberation Serif', serif;letter-spacing:0.063px;">АОУ СПО УР "Техникум радиоэлектроники и информационных технологий "</div>
<div class="t" style="left:463px;top:391px;font-size:16px;font-weight:bold;font-family:'Liberation Serif', serif;letter-spacing:0.048px;">Отчеты на дату</div>
<div class="t" style="left:463px;top:408px;font-size:16px;font-weight:bold;font-family:'Liberation Serif', serif;letter-spacing:0.800px;">29.01.2014</div>
<div class="a" style="left:593px;top:392px;width:94px;text-align:center;font-family:'Liberation Serif', serif;font-weight:bold;font-size:15px;line-height:1;white-space:nowrap">Анализ</div><div class="a" style="left:593px;top:409px;width:94px;text-align:center;font-family:'Liberation Serif', serif;font-weight:bold;font-size:15px;line-height:1;white-space:nowrap">расчетов</div>
<div class="a" style="left:688px;top:394px;width:141px;text-align:center;font-family:'Liberation Serif', serif;font-weight:bold;font-size:13px;line-height:1;white-space:nowrap">Реестр (перечень)</div><div class="a" style="left:688px;top:409px;width:141px;text-align:center;font-family:'Liberation Serif', serif;font-weight:bold;font-size:13px;line-height:1;white-space:nowrap">услуг (работ)</div>
<div class="a" style="left:830px;top:394px;width:93px;text-align:center;font-family:'Liberation Serif', serif;font-weight:bold;font-size:13px;line-height:1;white-space:nowrap">Отчетная</div><div class="a" style="left:830px;top:409px;width:93px;text-align:center;font-family:'Liberation Serif', serif;font-weight:bold;font-size:13px;line-height:1;white-space:nowrap">форма ГЗ</div>
<div class="a" style="left:924px;top:394px;width:94px;text-align:center;font-family:'Liberation Serif', serif;font-weight:bold;font-size:13px;line-height:1;white-space:nowrap">Исполнение</div><div class="a" style="left:924px;top:409px;width:94px;text-align:center;font-family:'Liberation Serif', serif;font-weight:bold;font-size:13px;line-height:1;white-space:nowrap">ГЗ</div>
<div class="a" style="left:1113px;top:394px;width:93px;text-align:center;font-family:'Liberation Serif', serif;font-weight:bold;font-size:13px;line-height:1;white-space:nowrap">Экспорт на</div><div class="a" style="left:1113px;top:409px;width:93px;text-align:center;font-family:'Liberation Serif', serif;font-weight:bold;font-size:13px;line-height:1;white-space:nowrap">bus.gov.ru</div>
<div class="t" style="left:463px;top:428px;font-size:15px;color:#222;font-style:italic;font-family:'Liberation Serif', serif;letter-spacing:0.290px;">Наименование</div>
<div class="t" style="left:463px;top:445px;font-size:15px;color:#222;font-style:italic;font-family:'Liberation Serif', serif;letter-spacing:0.297px;">услуги (работы):</div>
<div class="t" style="left:595px;top:445px;font-size:15px;font-weight:bold;font-style:italic;font-family:'Liberation Serif', serif;letter-spacing:0.088px;">Предоставление среднего профессионального образования</div>
<div class="t" style="left:463px;top:464px;font-size:13px;font-family:'Liberation Serif', serif;letter-spacing:0.203px;">Отчетная форма</div>
<div class="t" style="left:595px;top:464px;font-size:13px;font-style:italic;font-family:'Liberation Serif', serif;letter-spacing:-0.109px;">Потре</div>
<div class="t" style="left:643px;top:464px;font-size:13px;font-style:italic;font-family:'Liberation Serif', serif;letter-spacing:0.291px;">Качес</div>
<div class="t" style="left:690px;top:464px;font-size:13px;font-style:italic;font-family:'Liberation Serif', serif;letter-spacing:-1.019px;">Объем</div>
<div class="t" style="left:737px;top:464px;font-size:13px;font-style:italic;font-family:'Liberation Serif', serif;letter-spacing:-0.573px;">НПА</div>
<div class="t" style="left:784px;top:464px;font-size:13px;font-style:italic;font-family:'Liberation Serif', serif;letter-spacing:-1.279px;">Инф-ие</div>
<div class="t" style="left:832px;top:464px;font-size:13px;font-style:italic;font-family:'Liberation Serif', serif;letter-spacing:-0.596px;">Прекр-</div>
<div class="t" style="left:879px;top:464px;font-size:13px;font-style:italic;font-family:'Liberation Serif', serif;letter-spacing:-0.477px;">Пок. Ц</div>
<div class="t" style="left:926px;top:464px;font-size:13px;font-style:italic;font-family:'Liberation Serif', serif;letter-spacing:-0.700px;">Тариф</div>
<div class="t" style="left:973px;top:464px;font-size:13px;font-style:italic;font-family:'Liberation Serif', serif;letter-spacing:-0.797px;">Контр</div>
<div class="t" style="left:1021px;top:464px;font-size:13px;font-style:italic;font-family:'Liberation Serif', serif;letter-spacing:-0.053px;">Сроки</div>
<div class="t" style="left:1068px;top:464px;font-size:13px;font-style:italic;font-family:'Liberation Serif', serif;letter-spacing:-0.586px;">Требов</div>
<div class="t" style="left:1115px;top:464px;font-size:13px;font-style:italic;font-family:'Liberation Serif', serif;letter-spacing:-0.981px;">Инф-и</div>
<div class="t" style="left:463px;top:495px;font-size:15px;font-family:'Liberation Serif', serif;letter-spacing:0.243px;">Категория: услуга</div>
<svg width="0" height="0" style="position:absolute"><defs><linearGradient id="gg" x1="0" y1="0" x2="0" y2="1"><stop offset="0" stop-color="#c6ee94"/><stop offset=".3" stop-color="#94d456"/><stop offset=".58" stop-color="#3aa81a"/><stop offset=".8" stop-color="#5cc22c"/><stop offset="1" stop-color="#b4e47c"/></linearGradient><radialGradient id="gh" cx="35%" cy="30%" r="50%"><stop offset="0" stop-color="#e4f8b8" stop-opacity=".8"/><stop offset="1" stop-color="#e4f8b8" stop-opacity="0"/></radialGradient><radialGradient id="gs" cx="50%" cy="50%" r="50%"><stop offset="0" stop-color="#000" stop-opacity=".25"/><stop offset="1" stop-color="#000" stop-opacity="0"/></radialGradient><linearGradient id="bf" x1="0" y1="0" x2="0" y2="1"><stop offset="0" stop-color="#78b6ee"/><stop offset="1" stop-color="#2a7ee0"/></linearGradient></defs></svg>
<svg class="a" style="left:594px;top:480px" width="46" height="46" viewBox="0 0 46 46"><ellipse cx="23" cy="42" rx="18" ry="4" fill="url(#gs)"/><circle cx="22.5" cy="22.5" r="21" fill="url(#gg)" stroke="#9aa49a" stroke-width=".9"/><circle cx="22.5" cy="22.5" r="21" fill="url(#gh)"/><path d="M15 22 L22 34 L29.5 12" stroke="#eef4e6" stroke-width="6.5" fill="none" stroke-linecap="round" stroke-linejoin="round"/></svg>
<svg class="a" style="left:642px;top:480px" width="46" height="46" viewBox="0 0 46 46"><ellipse cx="23" cy="42" rx="18" ry="4" fill="url(#gs)"/><circle cx="22.5" cy="22.5" r="21" fill="url(#gg)" stroke="#9aa49a" stroke-width=".9"/><circle cx="22.5" cy="22.5" r="21" fill="url(#gh)"/><path d="M15 22 L22 34 L29.5 12" stroke="#eef4e6" stroke-width="6.5" fill="none" stroke-linecap="round" stroke-linejoin="round"/></svg>
<svg class="a" style="left:689px;top:480px" width="46" height="46" viewBox="0 0 46 46"><ellipse cx="23" cy="42" rx="18" ry="4" fill="url(#gs)"/><circle cx="22.5" cy="22.5" r="21" fill="url(#gg)" stroke="#9aa49a" stroke-width=".9"/><circle cx="22.5" cy="22.5" r="21" fill="url(#gh)"/><path d="M15 22 L22 34 L29.5 12" stroke="#eef4e6" stroke-width="6.5" fill="none" stroke-linecap="round" stroke-linejoin="round"/></svg>
<svg class="a" style="left:736px;top:480px" width="46" height="46" viewBox="0 0 46 46"><ellipse cx="23" cy="42" rx="18" ry="4" fill="url(#gs)"/><circle cx="22.5" cy="22.5" r="21" fill="url(#gg)" stroke="#9aa49a" stroke-width=".9"/><circle cx="22.5" cy="22.5" r="21" fill="url(#gh)"/><path d="M15 22 L22 34 L29.5 12" stroke="#eef4e6" stroke-width="6.5" fill="none" stroke-linecap="round" stroke-linejoin="round"/></svg>
<svg class="a" style="left:783px;top:480px" width="46" height="46" viewBox="0 0 46 46"><ellipse cx="23" cy="42" rx="18" ry="4" fill="url(#gs)"/><circle cx="22.5" cy="22.5" r="21" fill="url(#gg)" stroke="#9aa49a" stroke-width=".9"/><circle cx="22.5" cy="22.5" r="21" fill="url(#gh)"/><path d="M15 22 L22 34 L29.5 12" stroke="#eef4e6" stroke-width="6.5" fill="none" stroke-linecap="round" stroke-linejoin="round"/></svg>
<svg class="a" style="left:831px;top:480px" width="46" height="46" viewBox="0 0 46 46"><ellipse cx="23" cy="42" rx="18" ry="4" fill="url(#gs)"/><circle cx="22.5" cy="22.5" r="21" fill="url(#gg)" stroke="#9aa49a" stroke-width=".9"/><circle cx="22.5" cy="22.5" r="21" fill="url(#gh)"/><path d="M15 22 L22 34 L29.5 12" stroke="#eef4e6" stroke-width="6.5" fill="none" stroke-linecap="round" stroke-linejoin="round"/></svg>
<svg class="a" style="left:878px;top:480px" width="46" height="46" viewBox="0 0 46 46"><ellipse cx="22.6" cy="23.5" rx="21.3" ry="20.5" fill="#1a46b0"/><ellipse cx="22.6" cy="20.8" rx="21" ry="19" fill="url(#bf)"/><path d="M6 30 Q22.6 42 39 30" stroke="#8ab8f0" stroke-width="1" fill="none" opacity=".7"/><path d="M18 9 L33 21 L18 33Z" fill="#fff"/></svg>
<svg class="a" style="left:925px;top:480px" width="46" height="46" viewBox="0 0 46 46"><ellipse cx="22.6" cy="23.5" rx="21.3" ry="20.5" fill="#1a46b0"/><ellipse cx="22.6" cy="20.8" rx="21" ry="19" fill="url(#bf)"/><path d="M6 30 Q22.6 42 39 30" stroke="#8ab8f0" stroke-width="1" fill="none" opacity=".7"/><path d="M18 9 L33 21 L18 33Z" fill="#fff"/></svg>
<svg class="a" style="left:972px;top:480px" width="46" height="46" viewBox="0 0 46 46"><ellipse cx="23" cy="42" rx="18" ry="4" fill="url(#gs)"/><circle cx="22.5" cy="22.5" r="21" fill="url(#gg)" stroke="#9aa49a" stroke-width=".9"/><circle cx="22.5" cy="22.5" r="21" fill="url(#gh)"/><path d="M15 22 L22 34 L29.5 12" stroke="#eef4e6" stroke-width="6.5" fill="none" stroke-linecap="round" stroke-linejoin="round"/></svg>
<svg class="a" style="left:1020px;top:480px" width="46" height="46" viewBox="0 0 46 46"><ellipse cx="23" cy="42" rx="18" ry="4" fill="url(#gs)"/><circle cx="22.5" cy="22.5" r="21" fill="url(#gg)" stroke="#9aa49a" stroke-width=".9"/><circle cx="22.5" cy="22.5" r="21" fill="url(#gh)"/><path d="M15 22 L22 34 L29.5 12" stroke="#eef4e6" stroke-width="6.5" fill="none" stroke-linecap="round" stroke-linejoin="round"/></svg>
<svg class="a" style="left:1067px;top:480px" width="46" height="46" viewBox="0 0 46 46"><ellipse cx="23" cy="42" rx="18" ry="4" fill="url(#gs)"/><circle cx="22.5" cy="22.5" r="21" fill="url(#gg)" stroke="#9aa49a" stroke-width=".9"/><circle cx="22.5" cy="22.5" r="21" fill="url(#gh)"/><path d="M15 22 L22 34 L29.5 12" stroke="#eef4e6" stroke-width="6.5" fill="none" stroke-linecap="round" stroke-linejoin="round"/></svg>
<svg class="a" style="left:1114px;top:480px" width="46" height="46" viewBox="0 0 46 46"><ellipse cx="23" cy="42" rx="18" ry="4" fill="url(#gs)"/><circle cx="22.5" cy="22.5" r="21" fill="url(#gg)" stroke="#9aa49a" stroke-width=".9"/><circle cx="22.5" cy="22.5" r="21" fill="url(#gh)"/><path d="M15 22 L22 34 L29.5 12" stroke="#eef4e6" stroke-width="6.5" fill="none" stroke-linecap="round" stroke-linejoin="round"/></svg>
<div class="t" style="left:463px;top:556px;font-size:15.5px;font-family:'Liberation Serif', serif;letter-spacing:0.062px;">Прямые расходы</div>
<div class="t" style="left:463px;top:585px;font-size:15.5px;font-family:'Liberation Serif', serif;letter-spacing:-0.064px;">Косвенные</div>
<div class="t" style="left:463px;top:602px;font-size:15.5px;font-family:'Liberation Serif', serif;letter-spacing:0.275px;">расходы</div>
<div class="t" style="left:781px;top:558px;font-size:13.5px;font-family:'Liberation Serif', serif;letter-spacing:0.035px;">Показатель объема - 189</div>
<div class="t" style="left:684px;top:595px;font-size:13.5px;font-family:'Liberation Serif', serif;letter-spacing:-0.008px;">Общехозяйственные затраты и на содержание имущества.</div>
<div class="a" style="left:1113px;top:550px;width:93px;text-align:center;font-family:'Liberation Serif', serif;font-size:13.5px;line-height:15px;white-space:nowrap">Коррекция<br>справочников</div>
<div class="a" style="left:1113px;top:587px;width:93px;text-align:center;font-family:'Liberation Serif', serif;font-size:13.5px;line-height:15px;white-space:nowrap">Коррекция<br>справочников</div>
<div class="a" style="left:1198px;top:294px;width:1px;height:700px;border-left:1px dotted #c8c8c8"></div>
</div></div>
<div class="a" style="left:1261px;top:244px;width:17px;height:624px;background:#ebebeb"></div>
<div class="a" style="left:1265px;top:250px;border-left:4px solid transparent;border-right:4px solid transparent;border-bottom:4px solid #333"></div>
<div class="a" style="left:1265px;top:856px;border-left:4px solid transparent;border-right:4px solid transparent;border-top:4px solid #333"></div>
<div class="a" style="left:1262px;top:262px;width:15px;height:317px;border:1px solid #a3a3a3;border-radius:2px;background:linear-gradient(90deg,#f3f3f3,#e0e0e0 40%,#cfcfcf 60%,#bcbcbc)"></div>
<div class="a" style="left:1266px;top:414px;width:7px;height:6px;background:repeating-linear-gradient(#777 0 1px,transparent 1px 2px)"></div>
<div class="a" style="left:404px;top:868px;width:857px;height:16px;background:#ebebeb"></div>
<div class="a" style="left:1261px;top:868px;width:17px;height:16px;background:#eaf2fb"></div>
<div class="a" style="left:409px;top:872px;border-top:4px solid transparent;border-bottom:4px solid transparent;border-right:4px solid #888"></div>
<div class="a" style="left:1251px;top:872px;border-top:4px solid transparent;border-bottom:4px solid transparent;border-left:4px solid #888"></div>
<div class="a" style="left:403px;top:884px;width:875px;height:27px;background:#bcd8fc;border:1px solid #8fb2e0;border-top:none"></div>
<div class="t" style="left:435px;top:892.5px;font-size:11.5px;letter-spacing:-0.010px;">Поиск:</div>
<div class="a" style="left:480px;top:887px;width:186px;height:21px;background:#e8f0fa;border:1px solid #a7c0e0"></div>
<div class="a" style="left:655px;top:896px;border-left:4px solid transparent;border-right:4px solid transparent;border-top:4px solid #4a6a9a"></div>
<div class="a" style="left:673px;top:886px;width:24px;height:24px;background:linear-gradient(#d2e2f6,#b9d0ee);border:1px solid #8aa6cc;border-radius:2px"></div>
<div class="a" style="left:703px;top:886px;width:24px;height:24px;background:linear-gradient(#d2e2f6,#b9d0ee);border:1px solid #8aa6cc;border-radius:2px"></div>
<svg class="a" style="left:677px;top:890px" width="16" height="16" viewBox="0 0 16 16"><rect x="1.5" y="4" width="5" height="8" rx="2" fill="#8a8a8a"/><rect x="8" y="4" width="5" height="8" rx="2" fill="#8a8a8a"/><circle cx="4" cy="12" r="2.8" fill="#ddd" stroke="#777"/><circle cx="10.5" cy="12" r="2.8" fill="#ddd" stroke="#777"/><path d="M9 2h4v-1.5l3 3l-3 3v-1.5h-4z" fill="#8a8a8a"/></svg>
<svg class="a" style="left:707px;top:890px" width="16" height="16" viewBox="0 0 16 16"><rect x="3" y="4" width="5" height="8" rx="2" fill="#8a8a8a"/><rect x="9.5" y="4" width="5" height="8" rx="2" fill="#8a8a8a"/><circle cx="5.5" cy="12" r="2.8" fill="#ddd" stroke="#777"/><circle cx="12" cy="12" r="2.8" fill="#ddd" stroke="#777"/><path d="M7 2h-4v-1.5l-3 3l3 3v-1.5h4z" fill="#8a8a8a"/></svg>
<div class="a" style="left:733px;top:892px;width:13px;height:13px;background:#e9eef5;border:1px solid #a9b4c0"></div>
<div class="t" style="left:752px;top:893.5px;font-size:11.5px;color:#7d7d7d;letter-spacing:-0.276px;">Все</div>
<div class="a" style="left:780px;top:892px;width:13px;height:13px;background:#e9eef5;border:1px solid #a9b4c0"></div>
<div class="t" style="left:799px;top:893.5px;font-size:11.5px;color:#7d7d7d;letter-spacing:-0.033px;">Уч регистр</div>
<div class="a" style="left:864px;top:887px;width:80px;height:21px;background:#e8f0fa;border:1px solid #a7c0e0"></div>
<div class="t" style="left:868px;top:892.5px;font-size:11.5px;letter-spacing:-0.068px;">Подстрока</div>
<div class="a" style="left:932px;top:896px;border-left:4px solid transparent;border-right:4px solid transparent;border-top:4px solid #4a6a9a"></div>
<div class="a" style="left:403px;top:911px;width:875px;height:5px;background:#eeeeee"></div>
<div class="a" style="left:403px;top:916px;width:874px;height:24px;background:#c0d6ee;border:1px solid #e4ecf5;border-bottom-color:#dfe7f0"></div>
<div class="t" style="left:765px;top:923.5px;font-size:11.5px;color:#2a4a9a;letter-spacing:0.100px;">Дополнительная панель</div>
<div class="a" style="left:1256px;top:919px;width:18px;height:18px;background:linear-gradient(#f3f3f3,#d8d8d8);border:1px solid #888;border-right-color:#555;border-bottom-color:#555"></div>
<div class="t" style="left:1259px;top:920px;font-size:15px;">+</div>
<div class="a" style="left:399px;top:940px;width:879px;height:1px;background:#6a8ec0"></div>
<div class="a" style="left:399px;top:941px;width:879px;height:23px;background:linear-gradient(#d7e6f8,#c3d8f2 50%,#b0ccef 55%,#c9dcf4)"></div>
<div class="a" style="left:404px;top:947px;width:94px;height:13px;border:1px solid #b0a89c;border-radius:2px;background:linear-gradient(#f6f9fd,#dce9f7)"></div>
<div class="a" style="left:991px;top:944px;width:150px;height:17px;background:#e8f0fa;border:1px solid #c3d3e8"></div>
<div class="a" style="left:1130px;top:951px;border-left:4px solid transparent;border-right:4px solid transparent;border-top:4px solid #4a6a9a"></div>
<div class="a" style="left:1141px;top:943px;width:37px;height:20px;background:#dae8f8"></div>
<div class="t" style="left:1146px;top:949.5px;font-size:11.5px;color:#2a3a8a;letter-spacing:-0.855px;">100%</div>
<div class="a" style="left:1178px;top:941px;width:100px;height:23px;background:linear-gradient(#c4d8f2,#8fb0de)"></div>
<div class="a" style="left:1202px;top:954px;width:50px;height:1px;background:#e8eef6"></div>
<div class="a" style="left:1187px;top:946px;width:17px;height:17px;border-radius:50%;border:1px solid #4a5a78;background:radial-gradient(circle at 50% 25%,#ffffff,#dfe8f4 60%,#b8c8e0)"></div><div class="a" style="left:1190px;top:954px;width:11px;height:2px;background:#3a4a6a"></div>
<div class="a" style="left:1253px;top:946px;width:17px;height:17px;border-radius:50%;border:1px solid #4a5a78;background:radial-gradient(circle at 50% 25%,#ffffff,#dfe8f4 60%,#b8c8e0)"></div><div class="a" style="left:1256px;top:954px;width:11px;height:2px;background:#3a4a6a"></div><div class="a" style="left:1260px;top:949px;width:2px;height:11px;background:#3a4a6a"></div>
<svg class="a" style="left:1221px;top:946px" width="12" height="16" viewBox="0 0 12 16"><path d="M1.5 1.5 H10.5 V10 L6 14.5 L1.5 10Z" fill="#e8eef6" stroke="#4a5a7a"/><path d="M6 5v5" stroke="#889"/></svg>
<div class="a" style="left:0;top:963px;width:393px;height:2px;background:#5f86c0"></div>
<div class="a" style="left:399px;top:963px;width:881px;height:1px;background:#4f7ac0"></div>
<div class="a" style="left:399px;top:964px;width:881px;height:1px;background:#9a9ea6"></div>
<div class="a" style="left:0;top:965px;width:1280px;height:19px;background:linear-gradient(#dae8f9,#c8ddf6 30%,#b4d0f2 55%,#cfe2f8 100%)"></div>
<div class="a" style="left:0;top:984px;width:1280px;height:40px;background:linear-gradient(90deg,#6f8ca8 0,#7a98b5 60px,#9cc3e6 300px,#a8d0f2 540px,#9cc6ea 700px,#a6cff0 900px,#9ec3e2 1030px,#7d9db8 1100px,#6f8da8 1280px);border-top:1px solid #141c26"></div>
<div class="a" style="left:0;top:985px;width:1280px;height:18px;background:linear-gradient(rgba(255,255,255,.25),rgba(255,255,255,0))"></div>
<div class="a" style="left:8px;top:985px;width:38px;height:38px;border-radius:50%;background:radial-gradient(circle at 50% 80%,#4ad0f8 0,#1a70b8 40%,#0a3a70 75%);border:1px solid #1a3a5a;box-shadow:0 0 2px #9ac8f0"></div>
<div class="a" style="left:11px;top:987px;width:32px;height:17px;border-radius:16px 16px 8px 8px;background:linear-gradient(rgba(255,255,255,.5),rgba(255,255,255,.05))"></div>
<svg class="a" style="left:15px;top:992px" width="24" height="24" viewBox="0 0 24 24"><path d="M3 5 Q7 2.5 11 4.5 L10 11 Q6 9 2 11.5Z" fill="#f05a1a"/><path d="M12.5 5 Q16.5 7 21 4.5 L20 11 Q16 13.5 11.5 11.5Z" fill="#7ac030"/><path d="M2 13 Q6 10.5 10 12.5 L9 19 Q5 17 1 19.5Z" fill="#2a9ae8"/><path d="M11 13 Q15.5 15 20 12.5 L19 19 Q15 21.5 10 19.5Z" fill="#f8c01a"/></svg>
<div class="a" style="left:60px;top:985px;width:51px;height:39px;border:1px solid #3e5a78;border-radius:3px;background:linear-gradient(rgba(255,255,255,.7),rgba(255,255,255,.45) 50%,rgba(255,255,255,.3));box-shadow:inset 0 0 0 1px rgba(255,255,255,.6)"></div>
<div class="a" style="left:121px;top:985px;width:54px;height:39px;border:1px solid #3e5a78;border-radius:3px;background:linear-gradient(rgba(255,255,255,.7),rgba(255,255,255,.45) 50%,rgba(255,255,255,.3));box-shadow:inset 0 0 0 1px rgba(255,255,255,.6)"></div>
<div class="a" style="left:184px;top:985px;width:58px;height:39px;border:1px solid #3e5a78;border-radius:3px;background:linear-gradient(rgba(255,255,255,.7),rgba(255,255,255,.45) 50%,rgba(255,255,255,.3));box-shadow:inset 0 0 0 1px rgba(255,255,255,.6)"></div>
<div class="a" style="left:246px;top:985px;width:50px;height:39px;border:1px solid #3e5a78;border-radius:3px;background:linear-gradient(rgba(255,255,255,.7),rgba(255,255,255,.45) 50%,rgba(255,255,255,.3));box-shadow:inset 0 0 0 1px rgba(255,255,255,.6)"></div>
<div class="a" style="left:370px;top:985px;width:53px;height:39px;border:1px solid #3e5a78;border-radius:3px;background:linear-gradient(rgba(255,255,255,.7),rgba(255,255,255,.45) 50%,rgba(255,255,255,.3));box-shadow:inset 0 0 0 1px rgba(255,255,255,.6)"></div>
<div class="a" style="left:432px;top:985px;width:53px;height:39px;border:1px solid #3e5a78;border-radius:3px;background:linear-gradient(rgba(255,255,255,.7),rgba(255,255,255,.45) 50%,rgba(255,255,255,.3));box-shadow:inset 0 0 0 1px rgba(255,255,255,.6)"></div>
<div class="a" style="left:494px;top:985px;width:58px;height:39px;border:1px solid #3e5a78;border-radius:3px;background:linear-gradient(rgba(255,255,255,.7),rgba(255,255,255,.45) 50%,rgba(255,255,255,.3));box-shadow:inset 0 0 0 1px rgba(255,255,255,.6)"></div>
<div class="a" style="left:113px;top:985px;width:2px;height:39px;border-left:1px solid #4a6a88;border-right:1px solid #d8e8f8"></div>
<div class="a" style="left:116px;top:985px;width:2px;height:39px;border-left:1px solid #4a6a88;border-right:1px solid #d8e8f8"></div>
<div class="a" style="left:177px;top:985px;width:2px;height:39px;border-left:1px solid #4a6a88;border-right:1px solid #d8e8f8"></div>
<div class="a" style="left:180px;top:985px;width:2px;height:39px;border-left:1px solid #4a6a88;border-right:1px solid #d8e8f8"></div>
<div class="a" style="left:298px;top:985px;width:2px;height:39px;border-left:1px solid #4a6a88;border-right:1px solid #d8e8f8"></div>
<div class="a" style="left:301px;top:985px;width:2px;height:39px;border-left:1px solid #4a6a88;border-right:1px solid #d8e8f8"></div>
<div class="a" style="left:425px;top:985px;width:2px;height:39px;border-left:1px solid #4a6a88;border-right:1px solid #d8e8f8"></div>
<div class="a" style="left:487px;top:985px;width:2px;height:39px;border-left:1px solid #4a6a88;border-right:1px solid #d8e8f8"></div>
<div class="a" style="left:490px;top:985px;width:2px;height:39px;border-left:1px solid #4a6a88;border-right:1px solid #d8e8f8"></div>
<svg class="a" style="left:69px;top:988px" width="34" height="34" viewBox="0 0 34 34"><defs><linearGradient id="ieg" x1="0" y1="0" x2="0" y2="1"><stop offset="0" stop-color="#9adcfa"/><stop offset="1" stop-color="#1a84d4"/></linearGradient></defs><path d="M27 17.5 A10.5 10.5 0 1 0 24.5 24.5" stroke="url(#ieg)" stroke-width="6" fill="none"/><path d="M6.5 16 H27.5 V19.5 H6.5Z" fill="#3a9ee0"/><path d="M4 31 Q0 26 8 14 Q18 2 29 2 Q33 3.5 28 9" stroke="#f2bc22" stroke-width="2.6" fill="none"/></svg>
<svg class="a" style="left:131px;top:988px" width="34" height="32" viewBox="0 0 34 32"><path d="M3 6 h10 l2 3 h16 v20 h-28z" fill="#e8c870" stroke="#b08a30"/><rect x="8" y="4" width="5" height="3" fill="#2aa02a"/><rect x="16" y="5" width="5" height="3" fill="#d03a2a"/><rect x="24" y="7" width="5" height="3" fill="#2a8ae0"/><rect x="3" y="13" width="28" height="16" fill="#f8e0a0" stroke="#b08a30"/><path d="M9 27 V20 H25 V27" stroke="#5ab0e8" stroke-width="3" fill="none"/></svg>
<svg class="a" style="left:197px;top:988px" width="32" height="32" viewBox="0 0 32 32"><path d="M4 4 h18 l6 6 v20 h-24z" fill="#fff" stroke="#3a9a3a" stroke-width="1.5"/><rect x="12" y="12" width="16" height="16" fill="#4aa84a"/><path d="M12 17h16M12 22h16M20 12v16" stroke="#e8f4e8"/><path d="M4 10 L13 10 L9 17 L13 24 L4 24 L8 17Z" fill="#1a6a1a"/></svg>
<svg class="a" style="left:255px;top:988px" width="32" height="32" viewBox="0 0 32 32"><path d="M6 4 h16 l6 6 v20 h-22z" fill="#fff" stroke="#3a6ac0" stroke-width="1.5"/><path d="M12 13h14M12 17h14M12 21h14M12 25h14" stroke="#3a6ac0" stroke-width="1.5"/><path d="M2 6 Q10 3 16 5 V26 Q10 24 2 27Z" fill="#2a5ab0"/><text x="4" y="20" font-family="Liberation Serif" font-weight="bold" font-style="italic" font-size="12" fill="#fff">W</text></svg>
<svg class="a" style="left:318px;top:988px" width="32" height="32" viewBox="0 0 32 32"><rect x="3" y="4" width="22" height="24" fill="#cfe4f4" stroke="#6aa0c8"/><rect x="25" y="6" width="3" height="20" fill="#bcd8ee" stroke="#6aa0c8"/><circle cx="14" cy="16" r="9" fill="#f07a20"/><path d="M11 11 L19 16 L11 21Z" fill="#fff"/></svg>
<svg class="a" style="left:380px;top:988px" width="32" height="32" viewBox="0 0 32 32"><g fill="#3ac020" stroke="#1a6a10" stroke-width=".8"><ellipse cx="16" cy="7" rx="4" ry="6"/><ellipse cx="25" cy="11" rx="6" ry="4" transform="rotate(-20 25 11)"/><ellipse cx="25" cy="21" rx="6" ry="4" transform="rotate(20 25 21)"/><ellipse cx="16" cy="26" rx="4" ry="6"/><ellipse cx="8" cy="11" rx="6" ry="4" transform="rotate(20 8 11)"/></g><ellipse cx="7" cy="21" rx="6" ry="4" transform="rotate(-20 7 21)" fill="#e02a2a" stroke="#801010" stroke-width=".8"/><circle cx="16" cy="16" r="3.5" fill="#f8d020"/></svg>
<svg class="a" style="left:442px;top:988px" width="32" height="32" viewBox="0 0 32 32"><ellipse cx="16" cy="14" rx="13" ry="10" fill="#d8d0f8" stroke="#9a90d8"/><path d="M12 22 L14 30 L18 23Z" fill="#d8d0f8" stroke="#9a90d8"/><path d="M10 10h12M10 14h12M10 18h12" stroke="#8a80c8" stroke-width="1.5"/></svg>
<div class="a" style="left:507px;top:988px;width:32px;height:32px;background:#fff;border:1.5px solid #777"></div>
<svg class="a" style="left:508px;top:989px" width="30" height="30" viewBox="0 0 30 30"><defs><linearGradient id="lgG" x1="0" y1="0" x2="0" y2="1"><stop offset="0" stop-color="#0cb844"/><stop offset="1" stop-color="#055a1c"/></linearGradient><linearGradient id="lgB" x1="0" y1="0" x2="0" y2="1"><stop offset="0" stop-color="#1a5af8"/><stop offset="1" stop-color="#0a1a78"/></linearGradient></defs><g transform="translate(-1,-1)"><path d="M6.25 4.9 L19.7 4.9 L12.7 11.5 L5.1 11.5Z M4.5 12.7 L10.4 12.7 L8.5 15.8 L10 18.6 L3.9 18.6Z M3.3 19.7 L11.1 19.7 L16.2 26.4 L3 26.4Z" fill="url(#lgG)"/><path d="M20.9 4.9 L28.9 4.9 L27.5 11.5 L15 11.5Z M11.9 12.7 L18.9 12.7 L16.7 15.8 L18.3 18.6 L11.3 18.6 L9.7 15.8Z M14.1 19.7 L26.7 19.7 L25.8 26.4 L18.6 26.4Z" fill="url(#lgB)"/></g></svg>
<div class="t" style="left:1066px;top:996px;font-size:12px;color:#eef4fa;letter-spacing:-0.172px;">RU</div>
<div class="a" style="left:1096px;top:1002px;border-left:5px solid transparent;border-right:5px solid transparent;border-bottom:5px solid #f0f4f8"></div>
<svg class="a" style="left:1116px;top:995px" width="20" height="20" viewBox="0 0 20 20"><path d="M3 2 V18" stroke="#eee" stroke-width="1.5"/><path d="M4 3 H14 L12 7 L14 11 H4Z" fill="#f4f4f4" stroke="#555" stroke-width=".6"/><circle cx="13" cy="14" r="4.5" fill="#e02a2a" stroke="#fff"/><path d="M11 12 L15 16 M15 12 L11 16" stroke="#fff" stroke-width="1.3"/></svg>
<svg class="a" style="left:1141px;top:995px" width="20" height="20" viewBox="0 0 20 20"><rect x="6" y="5" width="12" height="9" fill="#4a5a6a" stroke="#e8eef4"/><path d="M12 14v3M8 17h8" stroke="#e8eef4"/><path d="M3 2v8M2 4h3" stroke="#e8eef4" stroke-width="1.5"/></svg>
<svg class="a" style="left:1164px;top:995px" width="20" height="20" viewBox="0 0 20 20"><path d="M2 7h4l5-4v14l-5-4h-4z" fill="#f0f4f8" stroke="#555" stroke-width=".6"/><path d="M13 6 Q16 10 13 14M15 4 Q19 10 15 16" stroke="#f0f4f8" stroke-width="1.3" fill="none"/></svg>
<div class="t" style="left:1213px;top:991px;font-size:12px;color:#fff;letter-spacing:-0.406px;">14:14</div>
<div class="t" style="left:1199px;top:1008px;font-size:12px;color:#fff;letter-spacing:-0.606px;">12.03.2014</div>
<div class="a" style="left:1266px;top:985px;width:14px;height:39px;border-left:1px solid #4a6a88;background:linear-gradient(90deg,rgba(255,255,255,.3),rgba(255,255,255,.1))"></div>
</body></html>
